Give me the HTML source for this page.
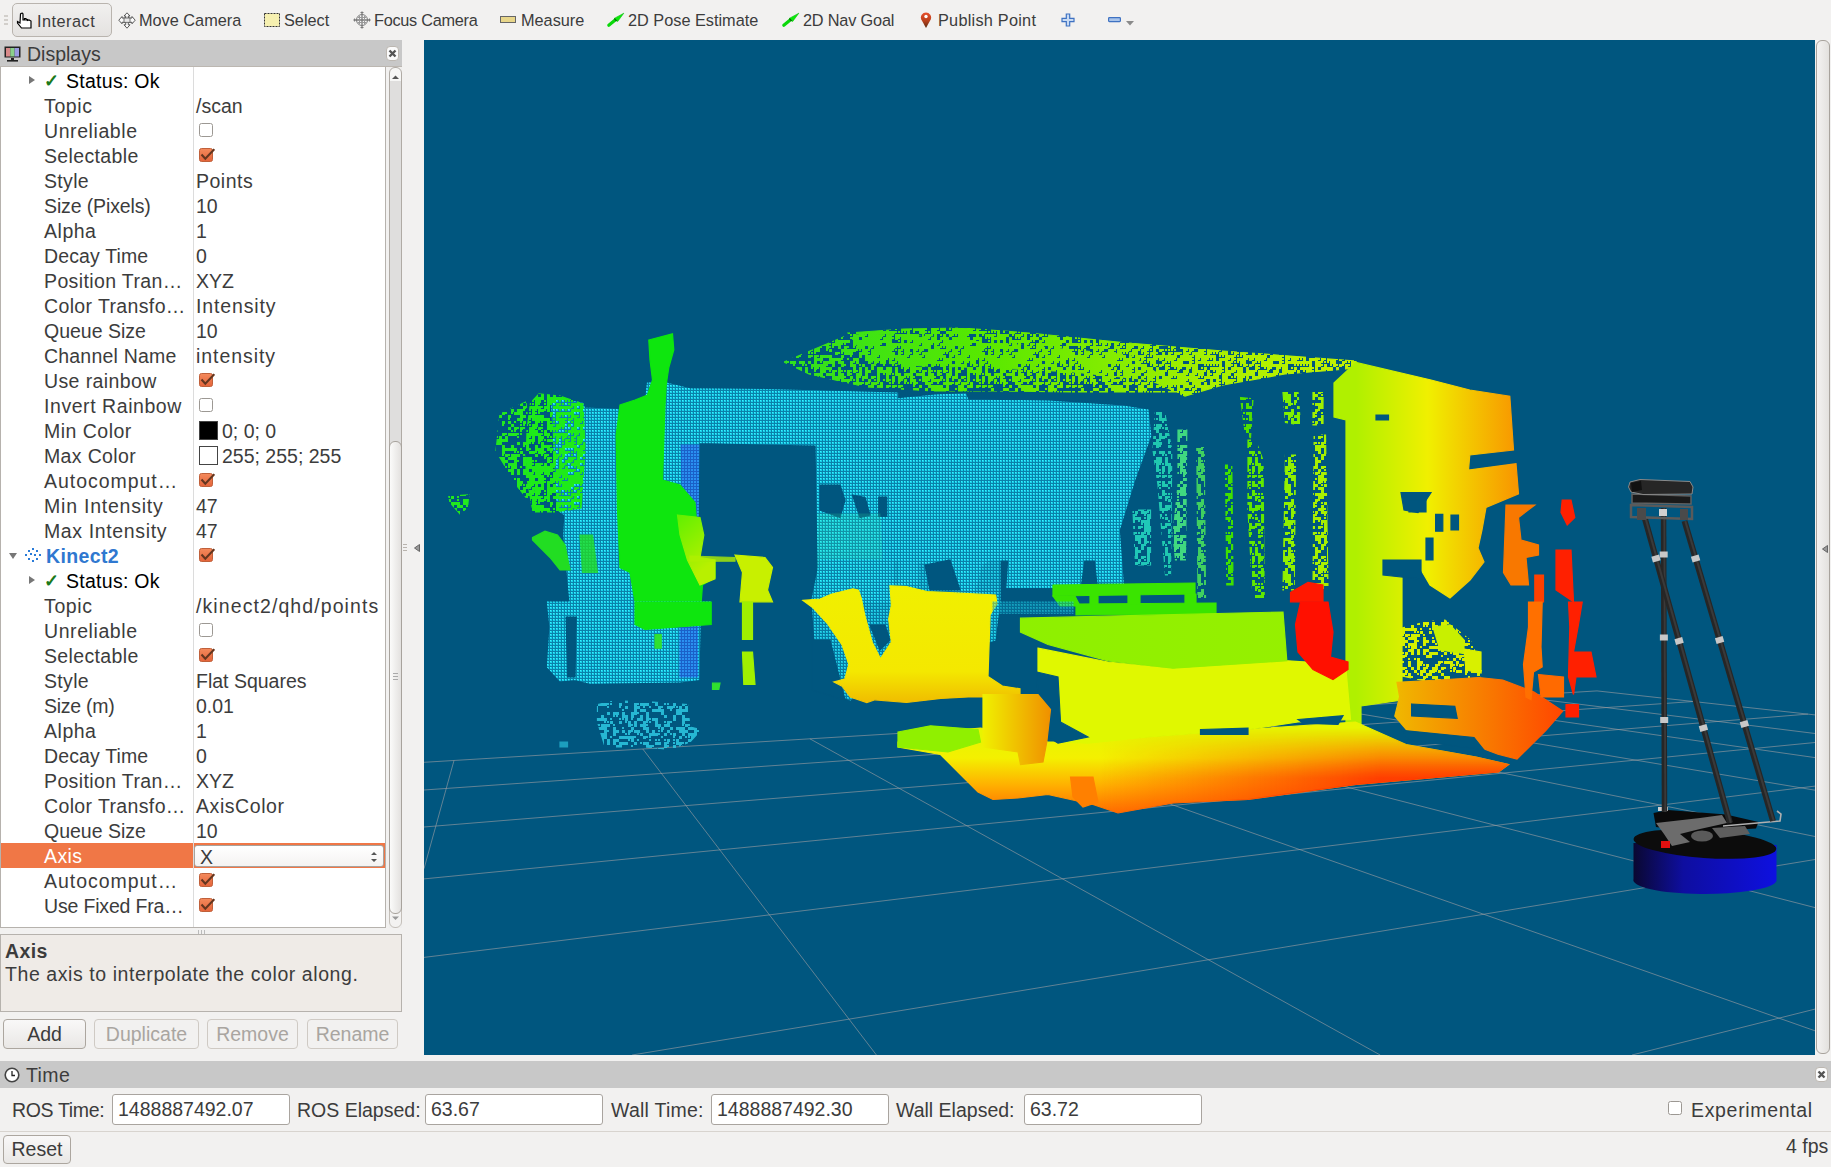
<!DOCTYPE html>
<html><head><meta charset="utf-8"><style>
*{box-sizing:border-box}
html,body{margin:0;padding:0}
body{width:1831px;height:1167px;overflow:hidden;position:relative;background:#f2f1f0;font-family:"Liberation Sans",sans-serif;color:#3c3c3c}
.abs{position:absolute}
.tb{position:absolute;top:0;left:0;width:1831px;height:40px;background:#f2f1f0}
.tbi{position:absolute;top:10px;font-size:16.3px;line-height:20px;color:#3c3c3c;white-space:nowrap}
.ic{position:absolute}
.hdr{position:absolute;background:#c8c8c8;height:27px}
.hdr .t{position:absolute;font-size:19.5px;line-height:24px;top:2px;color:#3c3c3c}
.xbtn{position:absolute;width:13px;height:15px;background:#fbfbfb;border:1px solid #bcb7b1;border-radius:4px}
.tree{position:absolute;left:0;top:67px;width:386px;height:861px;background:#fff;border:1px solid #b6b2ad;border-top:none;overflow:hidden}
.row{position:absolute;left:-1px;width:385px;height:25px}
.row .nm{position:absolute;left:44px;top:1px;font-size:19.5px;line-height:24px;white-space:nowrap;color:#3c3c3c}
.row .nm.st{left:66px;color:#000}
.row .nm.kin{left:46px;color:#2f78d0;font-weight:bold}
.row .vl{position:absolute;left:196px;top:1px;font-size:19.5px;line-height:24px;white-space:nowrap;color:#3c3c3c}
.row.sel{background:#f07746}
.row.sel .nm{color:#fff}
.arr{position:absolute;width:0;height:0}
.arr.r{top:8px;border-left:6px solid #777;border-top:4px solid transparent;border-bottom:4px solid transparent}
.arr.d{top:10px;border-top:6px solid #777;border-left:4px solid transparent;border-right:4px solid transparent}
.chk{position:absolute;left:44px;top:1px;font-size:18px;line-height:24px;color:#1b7a1b;font-weight:bold}
.pcicon{position:absolute;left:24px;top:4px}
.cb{position:absolute;left:199px;top:5px}
.sw{position:absolute;left:199px;top:3px;width:19px;height:19px;border:1px solid #444}
.combo{position:absolute;left:194px;top:2px;width:190px;height:22px;background:linear-gradient(#fff,#f4f3f2);border:1px solid #a8a29c;border-radius:3px}
.combo span{position:absolute;left:5px;top:-1px;font-size:19.5px;line-height:24px;color:#3c3c3c}
.colline{position:absolute;left:193px;top:67px;width:1px;height:860px;background:#dcdcdc}
.sbar{position:absolute;left:389px;top:67px;width:13px;height:861px}
.btn{position:absolute;height:30px;border:1px solid #aca69f;border-radius:4px;background:linear-gradient(#f9f8f8,#e9e7e5);font-size:19.5px;line-height:28px;text-align:center;color:#3c3c3c}
.btn.dis{color:#a9a5a0;background:#f2f1f0;border-color:#cfcac4}
.inp{position:absolute;height:31px;background:#fff;border:1px solid #a9a49f;border-radius:3px;font-size:19.5px;line-height:29px;padding-left:5px;color:#3c3c3c}
.lbl{position:absolute;font-size:19.5px;line-height:24px;color:#3c3c3c;white-space:nowrap}
</style></head><body><svg width="0" height="0" style="position:absolute"><defs><linearGradient id="cbg" x1="0" y1="0" x2="0" y2="1"><stop offset="0" stop-color="#f48a5c"/><stop offset="1" stop-color="#e4643a"/></linearGradient></defs></svg>
<!-- TOOLBAR -->
<div class="tb">
  <div class="abs" style="left:4px;top:15px;width:4px;height:2px;background:#d2cfcb"></div>
  <div class="abs" style="left:4px;top:19px;width:4px;height:2px;background:#d2cfcb"></div>
  <div class="abs" style="left:4px;top:23px;width:4px;height:2px;background:#d2cfcb"></div>
  <div class="abs" style="left:12px;top:3px;width:100px;height:34px;border:1px solid #b9b4ae;border-radius:5px;background:linear-gradient(#f1f0ef,#e4e2e0)"></div>
  <svg class="ic" style="left:16px;top:12px" width="18" height="18" viewBox="0 0 18 18"><path d="M5 1.5 Q6.5 0.5 7 2 L7 8 L8.5 8 L8.5 6.5 L10 6.5 L10 8 L11.5 7.5 L11.5 8.5 L13 8 L15 9 L15 16 L5.5 16 L1.5 11 L1.5 9.5 L4 11 L4.5 2Z" fill="#fff" stroke="#000" stroke-width="1.2"/></svg>
  <span class="tbi" style="letter-spacing:0.49px;left:37px;top:11px">Interact</span>
  <svg class="ic" style="left:118px;top:12px" width="18" height="17" viewBox="0 0 18 17"><path d="M9 0.8 L12 4 L10.3 4 L10.3 6 L14 6 L14 4.5 L17.2 8.2 L14 11.8 L14 10.3 L10.3 10.3 L10.3 12.8 L12 12.8 L9 16.2 L6 12.8 L7.7 12.8 L7.7 10.3 L4 10.3 L4 11.8 L0.8 8.2 L4 4.5 L4 6 L7.7 6 L7.7 4 L6 4Z" fill="#fafafa" stroke="#4a4a4a" stroke-width="0.9"/><rect x="6" y="6" width="6" height="4.3" fill="#e8e8e8" stroke="#555" stroke-width="0.8"/></svg>
  <span class="tbi" style="left:139px">Move Camera</span>
  <svg class="ic" style="left:264px;top:13px" width="16" height="14" viewBox="0 0 16 14"><rect x="0.5" y="0.5" width="15" height="13" fill="#f6f0b0" stroke="#333" stroke-dasharray="2 1"/></svg>
  <span class="tbi" style="left:284px">Select</span>
  <svg class="ic" style="left:353px;top:11px" width="18" height="18" viewBox="0 0 18 18"><g fill="none" stroke="#7a7a7a" stroke-width="1"><circle cx="9" cy="9" r="5.5" fill="#f6f6f6"/><path d="M9 0.5 L9 17.5 M0.5 9 L17.5 9" stroke-width="1.3"/><path d="M6.5 5 L6.5 13 M11.5 5 L11.5 13 M5 6.5 L13 6.5 M5 11.5 L13 11.5" stroke="#999"/><path d="M7.5 1.5 H10.5 M7.5 16.5 H10.5 M1.5 7.5 V10.5 M16.5 7.5 V10.5"/></g></svg>
  <span class="tbi" style="letter-spacing:-0.27px;left:374px">Focus Camera</span>
  <svg class="ic" style="left:500px;top:16px" width="16" height="8" viewBox="0 0 16 8"><rect x="0.5" y="0.5" width="15" height="6" fill="#e8d68a" stroke="#666"/></svg>
  <span class="tbi" style="left:521px">Measure</span>
  <svg class="ic" style="left:606px;top:10px" width="20" height="18" viewBox="0 0 20 18"><path d="M2.8 15.2 L9.8 9.6" stroke="#0ad80a" stroke-width="3.2" stroke-linecap="round"/><path d="M17.8 3.2 L8.2 8.4 L11.6 11.6Z" fill="#0aea0a" stroke="#08c008" stroke-width="0.6"/><path d="M8.4 8.6 L10.6 11" stroke="#066b06" stroke-width="1.2"/></svg>
  <span class="tbi" style="left:628px">2D Pose Estimate</span>
  <svg class="ic" style="left:781px;top:10px" width="20" height="18" viewBox="0 0 20 18"><path d="M2.8 15.2 L9.8 9.6" stroke="#0ad80a" stroke-width="3.2" stroke-linecap="round"/><path d="M17.8 3.2 L8.2 8.4 L11.6 11.6Z" fill="#0aea0a" stroke="#08c008" stroke-width="0.6"/><path d="M8.4 8.6 L10.6 11" stroke="#066b06" stroke-width="1.2"/></svg>
  <span class="tbi" style="letter-spacing:-0.18px;left:803px">2D Nav Goal</span>
  <svg class="ic" style="left:920px;top:11px" width="12" height="18" viewBox="0 0 12 18"><defs><linearGradient id="ping" x1="0" y1="0" x2="0" y2="1"><stop offset="0" stop-color="#e8502c"/><stop offset="0.55" stop-color="#b8401c"/><stop offset="1" stop-color="#5a2a10"/></linearGradient></defs><path d="M6 17 L1.3 8.5 A5.1 5.1 0 1 1 10.7 8.5Z" fill="url(#ping)"/><circle cx="6" cy="5.5" r="1.7" fill="#fff"/></svg>
  <span class="tbi" style="letter-spacing:0.24px;left:938px">Publish Point</span>
  <svg class="ic" style="left:1061px;top:13px" width="14" height="14" viewBox="0 0 14 14"><path d="M5.3 1 H8.7 V5.3 H13 V8.7 H8.7 V13 H5.3 V8.7 H1 V5.3 H5.3Z" fill="#c9dbf3" stroke="#3f72c2" stroke-width="1.2"/></svg>
  <svg class="ic" style="left:1108px;top:17px" width="13" height="6" viewBox="0 0 13 6"><rect x="0.6" y="0.6" width="11.8" height="4" rx="0.8" fill="#a9c4ea" stroke="#3f72c2" stroke-width="1.2"/></svg>
  <svg class="ic" style="left:1126px;top:21px" width="8" height="5" viewBox="0 0 8 5"><path d="M0 0 L8 0 L4 4.5Z" fill="#8a8a8a"/></svg>
</div>

<!-- LEFT DOCK -->
<div class="hdr" style="left:0;top:40px;width:402px">
  <svg class="ic" style="left:4px;top:6px" width="17" height="16" viewBox="0 0 17 16"><rect x="0.5" y="0.5" width="16" height="11" fill="#222"/><rect x="2" y="2" width="4.3" height="8.5" fill="#d98a8a"/><rect x="6.3" y="2" width="4.3" height="8.5" fill="#8ad08a"/><rect x="10.6" y="2" width="4.4" height="8.5" fill="#9a9ae0"/><rect x="7" y="12" width="3" height="2" fill="#222"/><rect x="3" y="14" width="11" height="1.6" fill="#222"/></svg>
  <span class="t" style="left:27px">Displays</span>
  <div class="xbtn" style="left:386px;top:6px"><svg width="11" height="13" viewBox="0 0 11 13" style="position:absolute;left:0;top:0"><path d="M2.5 3.5 L8.5 9.5 M8.5 3.5 L2.5 9.5" stroke="#555" stroke-width="2.4"/></svg></div>
</div>
<div class="abs" style="left:0;top:66px;width:402px;height:1px;background:#bcb7b1"></div>
<div class="tree">
<div class="row" style="top:1px"><span class="arr r" style="left:29px"></span><span class="chk">✓</span><span class="nm st" style="letter-spacing:0.28px">Status: Ok</span></div>
<div class="row" style="top:26px"><span class="nm" style="letter-spacing:0.64px">Topic</span><span class="vl">/scan</span></div>
<div class="row" style="top:51px"><span class="nm" style="letter-spacing:0.58px">Unreliable</span><svg class="cb" width="16" height="16" viewBox="0 0 16 16"><rect x="0.5" y="0.5" width="13" height="13" rx="2" fill="#fff" stroke="#9c9893"/></svg></div>
<div class="row" style="top:76px"><span class="nm" style="letter-spacing:0.36px">Selectable</span><svg class="cb" width="16" height="16" viewBox="0 0 16 16"><rect x="0.5" y="0.5" width="13" height="13" rx="2" fill="url(#cbg)" stroke="#c0603a"/><path d="M2.5 6.5 L6.3 10.8 L15.3 1.2" fill="none" stroke="#65361f" stroke-width="2.1"/></svg></div>
<div class="row" style="top:101px"><span class="nm" style="letter-spacing:0.32px">Style</span><span class="vl" style="letter-spacing:0.51px">Points</span></div>
<div class="row" style="top:126px"><span class="nm" style="letter-spacing:-0.13px">Size (Pixels)</span><span class="vl">10</span></div>
<div class="row" style="top:151px"><span class="nm" style="letter-spacing:0.52px">Alpha</span><span class="vl">1</span></div>
<div class="row" style="top:176px"><span class="nm" style="letter-spacing:0.14px">Decay Time</span><span class="vl">0</span></div>
<div class="row" style="top:201px"><span class="nm" style="letter-spacing:0.38px">Position Tran…</span><span class="vl">XYZ</span></div>
<div class="row" style="top:226px"><span class="nm" style="letter-spacing:0.37px">Color Transfo…</span><span class="vl" style="letter-spacing:0.87px">Intensity</span></div>
<div class="row" style="top:251px"><span class="nm">Queue Size</span><span class="vl">10</span></div>
<div class="row" style="top:276px"><span class="nm" style="letter-spacing:0.2px">Channel Name</span><span class="vl" style="letter-spacing:0.94px">intensity</span></div>
<div class="row" style="top:301px"><span class="nm" style="letter-spacing:0.39px">Use rainbow</span><svg class="cb" width="16" height="16" viewBox="0 0 16 16"><rect x="0.5" y="0.5" width="13" height="13" rx="2" fill="url(#cbg)" stroke="#c0603a"/><path d="M2.5 6.5 L6.3 10.8 L15.3 1.2" fill="none" stroke="#65361f" stroke-width="2.1"/></svg></div>
<div class="row" style="top:326px"><span class="nm" style="letter-spacing:0.56px">Invert Rainbow</span><svg class="cb" width="16" height="16" viewBox="0 0 16 16"><rect x="0.5" y="0.5" width="13" height="13" rx="2" fill="#fff" stroke="#9c9893"/></svg></div>
<div class="row" style="top:351px"><span class="nm" style="letter-spacing:0.48px">Min Color</span><span class="sw" style="background:#000"></span><span class="vl" style="left:222px">0; 0; 0</span></div>
<div class="row" style="top:376px"><span class="nm" style="letter-spacing:0.35px">Max Color</span><span class="sw" style="background:#fff"></span><span class="vl" style="left:222px">255; 255; 255</span></div>
<div class="row" style="top:401px"><span class="nm" style="letter-spacing:0.96px">Autocomput…</span><svg class="cb" width="16" height="16" viewBox="0 0 16 16"><rect x="0.5" y="0.5" width="13" height="13" rx="2" fill="url(#cbg)" stroke="#c0603a"/><path d="M2.5 6.5 L6.3 10.8 L15.3 1.2" fill="none" stroke="#65361f" stroke-width="2.1"/></svg></div>
<div class="row" style="top:426px"><span class="nm" style="letter-spacing:0.78px">Min Intensity</span><span class="vl">47</span></div>
<div class="row" style="top:451px"><span class="nm" style="letter-spacing:0.63px">Max Intensity</span><span class="vl">47</span></div>
<div class="row" style="top:476px"><span class="arr d" style="left:9px"></span><svg class="pcicon" width="18" height="16" viewBox="0 0 18 16"><g fill="#2a7bd8"><rect x="8" y="1" width="2" height="2"/><rect x="4" y="3" width="2" height="2"/><rect x="12" y="3" width="2" height="2"/><rect x="1" y="7" width="2" height="2"/><rect x="6" y="6" width="2" height="2"/><rect x="10" y="7" width="2" height="2"/><rect x="15" y="7" width="2" height="2"/><rect x="4" y="11" width="2" height="2"/><rect x="12" y="11" width="2" height="2"/><rect x="8" y="13" width="2" height="2"/></g></svg><span class="nm kin" style="letter-spacing:0.36px">Kinect2</span><svg class="cb" width="16" height="16" viewBox="0 0 16 16"><rect x="0.5" y="0.5" width="13" height="13" rx="2" fill="url(#cbg)" stroke="#c0603a"/><path d="M2.5 6.5 L6.3 10.8 L15.3 1.2" fill="none" stroke="#65361f" stroke-width="2.1"/></svg></div>
<div class="row" style="top:501px"><span class="arr r" style="left:29px"></span><span class="chk">✓</span><span class="nm st" style="letter-spacing:0.28px">Status: Ok</span></div>
<div class="row" style="top:526px"><span class="nm" style="letter-spacing:0.64px">Topic</span><span class="vl" style="letter-spacing:1.09px">/kinect2/qhd/points</span></div>
<div class="row" style="top:551px"><span class="nm" style="letter-spacing:0.58px">Unreliable</span><svg class="cb" width="16" height="16" viewBox="0 0 16 16"><rect x="0.5" y="0.5" width="13" height="13" rx="2" fill="#fff" stroke="#9c9893"/></svg></div>
<div class="row" style="top:576px"><span class="nm" style="letter-spacing:0.36px">Selectable</span><svg class="cb" width="16" height="16" viewBox="0 0 16 16"><rect x="0.5" y="0.5" width="13" height="13" rx="2" fill="url(#cbg)" stroke="#c0603a"/><path d="M2.5 6.5 L6.3 10.8 L15.3 1.2" fill="none" stroke="#65361f" stroke-width="2.1"/></svg></div>
<div class="row" style="top:601px"><span class="nm" style="letter-spacing:0.32px">Style</span><span class="vl">Flat Squares</span></div>
<div class="row" style="top:626px"><span class="nm" style="letter-spacing:-0.28px">Size (m)</span><span class="vl">0.01</span></div>
<div class="row" style="top:651px"><span class="nm" style="letter-spacing:0.52px">Alpha</span><span class="vl">1</span></div>
<div class="row" style="top:676px"><span class="nm" style="letter-spacing:0.14px">Decay Time</span><span class="vl">0</span></div>
<div class="row" style="top:701px"><span class="nm" style="letter-spacing:0.38px">Position Tran…</span><span class="vl">XYZ</span></div>
<div class="row" style="top:726px"><span class="nm" style="letter-spacing:0.37px">Color Transfo…</span><span class="vl" style="letter-spacing:0.56px">AxisColor</span></div>
<div class="row" style="top:751px"><span class="nm">Queue Size</span><span class="vl">10</span></div>
<div class="row sel" style="top:776px"><span class="nm" style="letter-spacing:0.39px">Axis</span><div class="combo"><span>X</span><svg width="10" height="16" style="position:absolute;right:4px;top:3px" viewBox="0 0 10 16"><path d="M2 6 L5 3 L8 6Z M2 10 L5 13 L8 10Z" fill="#555"/></svg></div></div>
<div class="row" style="top:801px"><span class="nm" style="letter-spacing:0.96px">Autocomput…</span><svg class="cb" width="16" height="16" viewBox="0 0 16 16"><rect x="0.5" y="0.5" width="13" height="13" rx="2" fill="url(#cbg)" stroke="#c0603a"/><path d="M2.5 6.5 L6.3 10.8 L15.3 1.2" fill="none" stroke="#65361f" stroke-width="2.1"/></svg></div>
<div class="row" style="top:826px"><span class="nm" style="letter-spacing:-0.17px">Use Fixed Fra…</span><svg class="cb" width="16" height="16" viewBox="0 0 16 16"><rect x="0.5" y="0.5" width="13" height="13" rx="2" fill="url(#cbg)" stroke="#c0603a"/><path d="M2.5 6.5 L6.3 10.8 L15.3 1.2" fill="none" stroke="#65361f" stroke-width="2.1"/></svg></div>
</div>
<div class="colline"></div>
<div class="sbar">
  <div class="abs" style="left:0;top:0;width:13px;height:861px;background:#efeeed"></div>
  <div class="abs" style="left:0;top:0;width:13px;height:40px;border:1px solid #b0aba5;border-radius:6px;background:#f6f6f5"></div>
  <svg class="ic" style="left:3px;top:8px" width="7" height="5" viewBox="0 0 7 5"><path d="M0 4 L3.5 0.5 L7 4Z" fill="#555"/></svg>
  <div class="abs" style="left:0;top:14px;width:13px;height:400px;border:1px solid #b0aba5;border-top:none;border-bottom:none;background:#dfdedd"></div>
  <div class="abs" style="left:0;top:830px;width:13px;height:31px;border:1px solid #c4bfb9;border-radius:6px;background:#f3f2f1"></div><svg class="ic" style="left:3px;top:849px" width="7" height="5" viewBox="0 0 7 5"><path d="M0 0.5 L3.5 4 L7 0.5Z" fill="#999"/></svg><div class="abs" style="left:0;top:374px;width:13px;height:473px;border:1px solid #a8a39d;border-radius:6px;background:linear-gradient(90deg,#fbfbfa,#e3e1df)"></div>
  <div class="abs" style="left:4px;top:606px;width:5px;height:1px;background:#aaa"></div>
  <div class="abs" style="left:4px;top:609px;width:5px;height:1px;background:#aaa"></div>
  <div class="abs" style="left:4px;top:612px;width:5px;height:1px;background:#aaa"></div>
</div>
<div class="abs" style="left:198px;top:930px;width:1px;height:4px;background:#bbb"></div>
<div class="abs" style="left:201px;top:930px;width:1px;height:4px;background:#bbb"></div>
<div class="abs" style="left:204px;top:930px;width:1px;height:4px;background:#bbb"></div>
<div class="abs" style="left:0;top:934px;width:402px;height:78px;background:#efebe7;border:1px solid #b6b2ad"></div>
<span class="lbl" style="letter-spacing:0.39px;left:5px;top:939px;font-weight:bold;color:#3c3c3c">Axis</span>
<span class="lbl" style="letter-spacing:0.57px;left:5px;top:962px">The axis to interpolate the color along.</span>
<div class="btn" style="left:3px;top:1019px;width:83px">Add</div>
<div class="btn dis" style="left:94px;top:1019px;width:105px">Duplicate</div>
<div class="btn dis" style="left:207px;top:1019px;width:91px">Remove</div>
<div class="btn dis" style="left:307px;top:1019px;width:91px">Rename</div>
<!-- splitter handle -->
<div class="abs" style="left:403px;top:544px;width:4px;height:1px;background:#b9b4ae"></div>
<div class="abs" style="left:403px;top:547px;width:4px;height:1px;background:#b9b4ae"></div>
<div class="abs" style="left:403px;top:550px;width:4px;height:1px;background:#b9b4ae"></div>
<svg class="ic" style="left:414px;top:544px" width="6" height="8" viewBox="0 0 6 8"><path d="M5.5 0.5 L0.5 4 L5.5 7.5Z" fill="#999" stroke="#666"/></svg>

<!-- 3D VIEW -->
<div class="abs" style="left:424px;top:40px;width:1391px;height:1015px;background:#00567f;overflow:hidden">
<svg id="view" width="1391" height="1015" viewBox="0 0 1391 1015" style="position:absolute;left:0;top:0">
<path d="M0.0 722.3L1173.0 650.9 M0.0 750.0L1269.1 661.5 M0.0 787.0L1383.9 674.1 M0.0 838.9L1391.0 702.5 M0.0 917.4L1391.0 746.1 M208.1 1015.0L1391.0 819.5 M1208.0 1015.0L1391.0 969.1 M30.0 720.5L0.0 828.7 M218.8 709.0L452.4 1015.0 M385.9 698.8L956.2 1015.0 M534.9 689.7L1391.0 990.8 M668.6 681.6L1391.0 867.6 M789.2 674.2L1391.0 796.5 M898.6 667.6L1391.0 750.2 M998.2 661.5L1391.0 717.6 M1089.3 656.0L1391.0 693.5 M1173.0 650.9L1391.0 674.9" stroke="#a0a0a4" stroke-opacity="0.6" stroke-width="1" fill="none"/>
<!--CLOUD--><g id="cloud"><defs><pattern id="cyan" width="3" height="3" patternUnits="userSpaceOnUse"><rect width="3" height="3" fill="#0a82aa"/><rect width="2" height="2" fill="#1ad0ea"/><rect width="1" height="1" fill="#3af2ff"/></pattern><pattern id="bluep" width="3" height="3" patternUnits="userSpaceOnUse"><rect width="3" height="3" fill="#1a60c8"/><rect width="2" height="2" fill="#2a90f0"/></pattern><pattern id="sparse" width="4" height="4" patternUnits="userSpaceOnUse"><rect width="2" height="2" fill="#20c8e0"/></pattern><pattern id="spDp" width="90" height="90" patternUnits="userSpaceOnUse"><path d="M0 0h3v3h-3zM3 0h3v3h-3zM6 0h3v3h-3zM9 0h2v2h-2zM12 0h3v3h-3zM18 0h2v2h-2zM21 0h3v3h-3zM24 0h3v3h-3zM30 0h2v2h-2zM33 0h3v3h-3zM36 0h3v3h-3zM39 0h3v3h-3zM45 0h2v2h-2zM51 0h2v2h-2zM54 0h2v2h-2zM57 0h2v2h-2zM63 0h3v3h-3zM66 0h2v2h-2zM69 0h3v3h-3zM72 0h3v3h-3zM75 0h3v3h-3zM78 0h3v3h-3zM84 0h2v2h-2zM3 3h3v3h-3zM15 3h2v2h-2zM18 3h2v2h-2zM21 3h3v3h-3zM24 3h2v2h-2zM30 3h2v2h-2zM33 3h3v3h-3zM36 3h2v2h-2zM42 3h3v3h-3zM45 3h2v2h-2zM48 3h2v2h-2zM54 3h2v2h-2zM57 3h3v3h-3zM60 3h3v3h-3zM63 3h3v3h-3zM66 3h3v3h-3zM69 3h2v2h-2zM72 3h2v2h-2zM78 3h3v3h-3zM81 3h3v3h-3zM84 3h3v3h-3zM87 3h2v2h-2zM0 6h3v3h-3zM3 6h3v3h-3zM6 6h2v2h-2zM9 6h3v3h-3zM12 6h3v3h-3zM15 6h3v3h-3zM18 6h3v3h-3zM21 6h3v3h-3zM24 6h3v3h-3zM27 6h2v2h-2zM30 6h3v3h-3zM33 6h3v3h-3zM39 6h3v3h-3zM42 6h3v3h-3zM45 6h3v3h-3zM48 6h3v3h-3zM51 6h3v3h-3zM54 6h3v3h-3zM57 6h2v2h-2zM60 6h3v3h-3zM66 6h3v3h-3zM69 6h3v3h-3zM72 6h3v3h-3zM75 6h2v2h-2zM78 6h2v2h-2zM81 6h3v3h-3zM84 6h2v2h-2zM87 6h3v3h-3zM0 9h3v3h-3zM3 9h2v2h-2zM9 9h3v3h-3zM15 9h2v2h-2zM18 9h3v3h-3zM21 9h2v2h-2zM24 9h3v3h-3zM27 9h3v3h-3zM30 9h2v2h-2zM33 9h3v3h-3zM45 9h2v2h-2zM51 9h2v2h-2zM57 9h3v3h-3zM60 9h3v3h-3zM63 9h3v3h-3zM66 9h3v3h-3zM72 9h2v2h-2zM75 9h2v2h-2zM84 9h3v3h-3zM87 9h3v3h-3zM0 12h3v3h-3zM3 12h3v3h-3zM9 12h3v3h-3zM12 12h2v2h-2zM15 12h2v2h-2zM18 12h3v3h-3zM21 12h2v2h-2zM24 12h2v2h-2zM36 12h3v3h-3zM42 12h3v3h-3zM45 12h3v3h-3zM48 12h3v3h-3zM51 12h3v3h-3zM54 12h3v3h-3zM57 12h3v3h-3zM66 12h3v3h-3zM69 12h3v3h-3zM72 12h3v3h-3zM75 12h3v3h-3zM78 12h3v3h-3zM81 12h3v3h-3zM84 12h3v3h-3zM87 12h3v3h-3zM0 15h3v3h-3zM6 15h2v2h-2zM9 15h3v3h-3zM12 15h3v3h-3zM15 15h3v3h-3zM18 15h3v3h-3zM21 15h3v3h-3zM24 15h3v3h-3zM27 15h3v3h-3zM36 15h2v2h-2zM42 15h3v3h-3zM45 15h2v2h-2zM48 15h2v2h-2zM54 15h2v2h-2zM57 15h3v3h-3zM60 15h3v3h-3zM63 15h2v2h-2zM66 15h3v3h-3zM69 15h2v2h-2zM72 15h3v3h-3zM78 15h2v2h-2zM81 15h2v2h-2zM87 15h2v2h-2zM0 18h2v2h-2zM3 18h2v2h-2zM6 18h2v2h-2zM12 18h3v3h-3zM15 18h2v2h-2zM18 18h3v3h-3zM21 18h3v3h-3zM24 18h3v3h-3zM27 18h3v3h-3zM30 18h3v3h-3zM33 18h3v3h-3zM39 18h2v2h-2zM42 18h3v3h-3zM45 18h3v3h-3zM48 18h3v3h-3zM51 18h2v2h-2zM54 18h3v3h-3zM57 18h2v2h-2zM60 18h3v3h-3zM63 18h3v3h-3zM66 18h3v3h-3zM69 18h3v3h-3zM72 18h3v3h-3zM78 18h2v2h-2zM81 18h2v2h-2zM84 18h3v3h-3zM87 18h3v3h-3zM0 21h3v3h-3zM3 21h3v3h-3zM6 21h2v2h-2zM9 21h2v2h-2zM12 21h3v3h-3zM15 21h2v2h-2zM21 21h3v3h-3zM24 21h2v2h-2zM27 21h2v2h-2zM33 21h3v3h-3zM36 21h2v2h-2zM39 21h2v2h-2zM45 21h3v3h-3zM48 21h3v3h-3zM51 21h2v2h-2zM57 21h2v2h-2zM60 21h3v3h-3zM63 21h3v3h-3zM66 21h2v2h-2zM69 21h3v3h-3zM72 21h3v3h-3zM75 21h3v3h-3zM78 21h3v3h-3zM81 21h3v3h-3zM87 21h3v3h-3zM0 24h3v3h-3zM3 24h3v3h-3zM12 24h2v2h-2zM15 24h2v2h-2zM18 24h3v3h-3zM21 24h3v3h-3zM27 24h2v2h-2zM33 24h3v3h-3zM36 24h3v3h-3zM39 24h2v2h-2zM42 24h3v3h-3zM45 24h3v3h-3zM48 24h3v3h-3zM54 24h3v3h-3zM60 24h3v3h-3zM63 24h3v3h-3zM66 24h3v3h-3zM69 24h3v3h-3zM72 24h3v3h-3zM75 24h2v2h-2zM78 24h2v2h-2zM81 24h3v3h-3zM84 24h2v2h-2zM87 24h3v3h-3zM0 27h2v2h-2zM3 27h3v3h-3zM6 27h3v3h-3zM9 27h3v3h-3zM15 27h3v3h-3zM18 27h3v3h-3zM21 27h2v2h-2zM24 27h3v3h-3zM27 27h2v2h-2zM33 27h3v3h-3zM36 27h3v3h-3zM39 27h3v3h-3zM42 27h3v3h-3zM45 27h2v2h-2zM48 27h2v2h-2zM57 27h3v3h-3zM60 27h3v3h-3zM66 27h3v3h-3zM72 27h3v3h-3zM75 27h3v3h-3zM78 27h3v3h-3zM81 27h3v3h-3zM84 27h3v3h-3zM87 27h3v3h-3zM0 30h3v3h-3zM3 30h3v3h-3zM12 30h2v2h-2zM15 30h3v3h-3zM18 30h3v3h-3zM21 30h3v3h-3zM27 30h2v2h-2zM30 30h3v3h-3zM36 30h2v2h-2zM39 30h2v2h-2zM42 30h2v2h-2zM51 30h2v2h-2zM54 30h3v3h-3zM57 30h3v3h-3zM60 30h3v3h-3zM63 30h3v3h-3zM66 30h3v3h-3zM69 30h3v3h-3zM72 30h2v2h-2zM75 30h3v3h-3zM81 30h3v3h-3zM84 30h3v3h-3zM87 30h3v3h-3zM0 33h3v3h-3zM6 33h3v3h-3zM9 33h3v3h-3zM12 33h3v3h-3zM15 33h3v3h-3zM18 33h3v3h-3zM21 33h3v3h-3zM24 33h3v3h-3zM27 33h2v2h-2zM30 33h3v3h-3zM33 33h3v3h-3zM39 33h3v3h-3zM42 33h3v3h-3zM45 33h3v3h-3zM48 33h3v3h-3zM51 33h3v3h-3zM57 33h2v2h-2zM60 33h3v3h-3zM63 33h2v2h-2zM66 33h3v3h-3zM69 33h3v3h-3zM75 33h3v3h-3zM78 33h3v3h-3zM81 33h3v3h-3zM84 33h3v3h-3zM0 36h2v2h-2zM3 36h2v2h-2zM12 36h3v3h-3zM15 36h2v2h-2zM18 36h3v3h-3zM24 36h3v3h-3zM27 36h3v3h-3zM33 36h2v2h-2zM36 36h2v2h-2zM39 36h2v2h-2zM42 36h3v3h-3zM45 36h2v2h-2zM48 36h3v3h-3zM51 36h2v2h-2zM54 36h2v2h-2zM57 36h3v3h-3zM60 36h2v2h-2zM63 36h3v3h-3zM66 36h3v3h-3zM69 36h3v3h-3zM75 36h2v2h-2zM81 36h2v2h-2zM84 36h3v3h-3zM87 36h3v3h-3zM0 39h2v2h-2zM3 39h3v3h-3zM6 39h3v3h-3zM9 39h3v3h-3zM12 39h3v3h-3zM15 39h3v3h-3zM18 39h3v3h-3zM24 39h3v3h-3zM27 39h2v2h-2zM30 39h2v2h-2zM33 39h3v3h-3zM36 39h3v3h-3zM42 39h3v3h-3zM48 39h2v2h-2zM51 39h3v3h-3zM54 39h2v2h-2zM57 39h3v3h-3zM60 39h2v2h-2zM63 39h3v3h-3zM66 39h3v3h-3zM72 39h2v2h-2zM75 39h3v3h-3zM78 39h2v2h-2zM81 39h3v3h-3zM84 39h3v3h-3zM87 39h2v2h-2zM0 42h3v3h-3zM3 42h3v3h-3zM6 42h2v2h-2zM9 42h3v3h-3zM12 42h3v3h-3zM15 42h2v2h-2zM18 42h2v2h-2zM24 42h2v2h-2zM27 42h3v3h-3zM39 42h2v2h-2zM42 42h2v2h-2zM48 42h2v2h-2zM51 42h3v3h-3zM54 42h3v3h-3zM57 42h3v3h-3zM60 42h2v2h-2zM63 42h3v3h-3zM66 42h2v2h-2zM69 42h3v3h-3zM72 42h3v3h-3zM75 42h3v3h-3zM78 42h2v2h-2zM81 42h2v2h-2zM0 45h3v3h-3zM3 45h3v3h-3zM6 45h3v3h-3zM9 45h2v2h-2zM12 45h3v3h-3zM21 45h3v3h-3zM27 45h3v3h-3zM30 45h3v3h-3zM33 45h3v3h-3zM36 45h2v2h-2zM39 45h2v2h-2zM48 45h3v3h-3zM51 45h3v3h-3zM54 45h3v3h-3zM57 45h3v3h-3zM60 45h3v3h-3zM66 45h3v3h-3zM69 45h3v3h-3zM72 45h3v3h-3zM81 45h3v3h-3zM84 45h2v2h-2zM87 45h2v2h-2zM0 48h3v3h-3zM3 48h3v3h-3zM6 48h2v2h-2zM12 48h3v3h-3zM21 48h3v3h-3zM24 48h3v3h-3zM27 48h3v3h-3zM33 48h3v3h-3zM36 48h3v3h-3zM42 48h2v2h-2zM45 48h3v3h-3zM48 48h3v3h-3zM60 48h3v3h-3zM63 48h3v3h-3zM66 48h3v3h-3zM69 48h2v2h-2zM72 48h3v3h-3zM75 48h3v3h-3zM84 48h3v3h-3zM0 51h3v3h-3zM6 51h3v3h-3zM15 51h3v3h-3zM18 51h3v3h-3zM21 51h2v2h-2zM24 51h3v3h-3zM27 51h3v3h-3zM30 51h2v2h-2zM36 51h2v2h-2zM39 51h3v3h-3zM45 51h3v3h-3zM48 51h3v3h-3zM51 51h3v3h-3zM54 51h2v2h-2zM57 51h2v2h-2zM60 51h2v2h-2zM63 51h3v3h-3zM66 51h3v3h-3zM69 51h3v3h-3zM72 51h2v2h-2zM78 51h2v2h-2zM81 51h3v3h-3zM84 51h3v3h-3zM0 54h3v3h-3zM3 54h3v3h-3zM6 54h2v2h-2zM9 54h3v3h-3zM21 54h3v3h-3zM27 54h2v2h-2zM30 54h3v3h-3zM33 54h2v2h-2zM39 54h3v3h-3zM42 54h3v3h-3zM45 54h2v2h-2zM48 54h3v3h-3zM57 54h2v2h-2zM63 54h3v3h-3zM66 54h3v3h-3zM72 54h2v2h-2zM75 54h3v3h-3zM87 54h3v3h-3zM0 57h3v3h-3zM3 57h3v3h-3zM6 57h3v3h-3zM9 57h3v3h-3zM12 57h3v3h-3zM15 57h3v3h-3zM30 57h2v2h-2zM33 57h3v3h-3zM36 57h2v2h-2zM39 57h3v3h-3zM42 57h2v2h-2zM45 57h3v3h-3zM48 57h2v2h-2zM54 57h3v3h-3zM57 57h3v3h-3zM60 57h2v2h-2zM63 57h3v3h-3zM69 57h2v2h-2zM72 57h3v3h-3zM75 57h2v2h-2zM78 57h2v2h-2zM81 57h3v3h-3zM84 57h3v3h-3zM87 57h3v3h-3zM0 60h2v2h-2zM3 60h3v3h-3zM6 60h3v3h-3zM9 60h3v3h-3zM12 60h3v3h-3zM15 60h3v3h-3zM18 60h2v2h-2zM21 60h2v2h-2zM33 60h3v3h-3zM36 60h2v2h-2zM39 60h3v3h-3zM45 60h3v3h-3zM51 60h3v3h-3zM54 60h3v3h-3zM57 60h2v2h-2zM60 60h3v3h-3zM63 60h3v3h-3zM66 60h3v3h-3zM69 60h3v3h-3zM72 60h2v2h-2zM75 60h3v3h-3zM78 60h2v2h-2zM84 60h3v3h-3zM87 60h3v3h-3zM6 63h3v3h-3zM9 63h2v2h-2zM12 63h3v3h-3zM15 63h3v3h-3zM18 63h2v2h-2zM21 63h3v3h-3zM24 63h3v3h-3zM27 63h2v2h-2zM30 63h3v3h-3zM36 63h3v3h-3zM39 63h3v3h-3zM45 63h3v3h-3zM48 63h3v3h-3zM51 63h2v2h-2zM57 63h3v3h-3zM60 63h3v3h-3zM63 63h3v3h-3zM69 63h2v2h-2zM75 63h2v2h-2zM78 63h3v3h-3zM81 63h3v3h-3zM84 63h3v3h-3zM3 66h3v3h-3zM6 66h3v3h-3zM9 66h3v3h-3zM12 66h3v3h-3zM15 66h3v3h-3zM18 66h3v3h-3zM21 66h3v3h-3zM24 66h3v3h-3zM27 66h3v3h-3zM30 66h3v3h-3zM33 66h3v3h-3zM36 66h3v3h-3zM39 66h2v2h-2zM45 66h3v3h-3zM48 66h2v2h-2zM51 66h3v3h-3zM60 66h2v2h-2zM63 66h3v3h-3zM66 66h3v3h-3zM69 66h3v3h-3zM72 66h3v3h-3zM78 66h3v3h-3zM84 66h3v3h-3zM87 66h2v2h-2zM0 69h3v3h-3zM3 69h3v3h-3zM6 69h2v2h-2zM12 69h2v2h-2zM18 69h3v3h-3zM21 69h3v3h-3zM24 69h3v3h-3zM27 69h3v3h-3zM30 69h3v3h-3zM33 69h3v3h-3zM36 69h3v3h-3zM39 69h2v2h-2zM42 69h3v3h-3zM45 69h3v3h-3zM48 69h3v3h-3zM51 69h3v3h-3zM54 69h3v3h-3zM57 69h3v3h-3zM60 69h2v2h-2zM66 69h3v3h-3zM69 69h3v3h-3zM72 69h2v2h-2zM75 69h2v2h-2zM78 69h3v3h-3zM81 69h2v2h-2zM84 69h3v3h-3zM87 69h3v3h-3zM0 72h2v2h-2zM6 72h2v2h-2zM9 72h2v2h-2zM12 72h3v3h-3zM15 72h2v2h-2zM18 72h2v2h-2zM21 72h3v3h-3zM24 72h3v3h-3zM27 72h2v2h-2zM30 72h3v3h-3zM33 72h3v3h-3zM39 72h3v3h-3zM42 72h3v3h-3zM45 72h3v3h-3zM48 72h3v3h-3zM51 72h3v3h-3zM60 72h3v3h-3zM63 72h3v3h-3zM66 72h2v2h-2zM69 72h3v3h-3zM75 72h3v3h-3zM78 72h3v3h-3zM81 72h3v3h-3zM84 72h3v3h-3zM87 72h3v3h-3zM3 75h3v3h-3zM6 75h2v2h-2zM9 75h3v3h-3zM15 75h3v3h-3zM18 75h3v3h-3zM21 75h3v3h-3zM24 75h3v3h-3zM27 75h3v3h-3zM33 75h2v2h-2zM36 75h2v2h-2zM39 75h3v3h-3zM42 75h3v3h-3zM45 75h2v2h-2zM48 75h3v3h-3zM51 75h3v3h-3zM54 75h3v3h-3zM57 75h3v3h-3zM60 75h3v3h-3zM63 75h3v3h-3zM66 75h3v3h-3zM69 75h2v2h-2zM72 75h3v3h-3zM75 75h3v3h-3zM78 75h3v3h-3zM81 75h2v2h-2zM84 75h3v3h-3zM0 78h3v3h-3zM3 78h3v3h-3zM9 78h3v3h-3zM15 78h3v3h-3zM18 78h3v3h-3zM24 78h3v3h-3zM27 78h3v3h-3zM30 78h2v2h-2zM36 78h3v3h-3zM39 78h3v3h-3zM42 78h3v3h-3zM45 78h3v3h-3zM48 78h2v2h-2zM51 78h2v2h-2zM54 78h3v3h-3zM57 78h3v3h-3zM60 78h3v3h-3zM63 78h3v3h-3zM66 78h3v3h-3zM72 78h3v3h-3zM75 78h2v2h-2zM78 78h2v2h-2zM81 78h3v3h-3zM84 78h3v3h-3zM87 78h3v3h-3zM0 81h3v3h-3zM3 81h3v3h-3zM6 81h3v3h-3zM9 81h2v2h-2zM12 81h3v3h-3zM15 81h3v3h-3zM18 81h3v3h-3zM21 81h3v3h-3zM24 81h3v3h-3zM27 81h3v3h-3zM30 81h2v2h-2zM33 81h3v3h-3zM36 81h3v3h-3zM39 81h2v2h-2zM42 81h2v2h-2zM45 81h3v3h-3zM48 81h3v3h-3zM51 81h3v3h-3zM54 81h3v3h-3zM57 81h3v3h-3zM60 81h3v3h-3zM63 81h3v3h-3zM66 81h3v3h-3zM69 81h2v2h-2zM72 81h2v2h-2zM78 81h2v2h-2zM81 81h2v2h-2zM87 81h3v3h-3zM3 84h2v2h-2zM9 84h3v3h-3zM12 84h2v2h-2zM15 84h3v3h-3zM18 84h2v2h-2zM21 84h3v3h-3zM27 84h3v3h-3zM33 84h3v3h-3zM39 84h3v3h-3zM45 84h2v2h-2zM48 84h3v3h-3zM51 84h3v3h-3zM54 84h3v3h-3zM57 84h3v3h-3zM66 84h2v2h-2zM69 84h3v3h-3zM72 84h3v3h-3zM84 84h3v3h-3zM87 84h3v3h-3zM3 87h3v3h-3zM9 87h2v2h-2zM12 87h3v3h-3zM15 87h2v2h-2zM18 87h3v3h-3zM21 87h3v3h-3zM24 87h3v3h-3zM27 87h3v3h-3zM33 87h3v3h-3zM36 87h3v3h-3zM39 87h3v3h-3zM42 87h3v3h-3zM45 87h3v3h-3zM48 87h3v3h-3zM51 87h3v3h-3zM54 87h3v3h-3zM60 87h3v3h-3zM63 87h2v2h-2zM66 87h3v3h-3zM69 87h3v3h-3zM72 87h3v3h-3zM75 87h3v3h-3zM78 87h2v2h-2zM81 87h2v2h-2zM84 87h2v2h-2zM87 87h2v2h-2z" fill="#fff"/></pattern><mask id="spD" maskUnits="userSpaceOnUse" x="0" y="0" width="1391" height="1015"><rect width="1391" height="1015" fill="url(#spDp)"/></mask><pattern id="spMp" width="90" height="90" patternUnits="userSpaceOnUse"><path d="M18 0h3v3h-3zM30 0h3v3h-3zM33 0h3v3h-3zM36 0h3v3h-3zM39 0h3v3h-3zM48 0h2v2h-2zM51 0h3v3h-3zM54 0h3v3h-3zM60 0h3v3h-3zM69 0h2v2h-2zM72 0h3v3h-3zM75 0h2v2h-2zM87 0h3v3h-3zM0 3h3v3h-3zM3 3h3v3h-3zM6 3h3v3h-3zM12 3h3v3h-3zM18 3h3v3h-3zM21 3h2v2h-2zM24 3h2v2h-2zM27 3h2v2h-2zM33 3h2v2h-2zM36 3h3v3h-3zM39 3h3v3h-3zM42 3h2v2h-2zM45 3h2v2h-2zM54 3h3v3h-3zM57 3h2v2h-2zM60 3h2v2h-2zM69 3h2v2h-2zM72 3h3v3h-3zM75 3h2v2h-2zM78 3h2v2h-2zM81 3h3v3h-3zM84 3h3v3h-3zM87 3h3v3h-3zM6 6h3v3h-3zM12 6h3v3h-3zM15 6h3v3h-3zM21 6h3v3h-3zM24 6h2v2h-2zM27 6h3v3h-3zM33 6h2v2h-2zM45 6h3v3h-3zM48 6h2v2h-2zM51 6h3v3h-3zM63 6h3v3h-3zM69 6h3v3h-3zM72 6h3v3h-3zM75 6h2v2h-2zM84 6h3v3h-3zM87 6h3v3h-3zM6 9h2v2h-2zM21 9h2v2h-2zM24 9h3v3h-3zM33 9h2v2h-2zM39 9h3v3h-3zM42 9h3v3h-3zM48 9h2v2h-2zM57 9h3v3h-3zM66 9h2v2h-2zM81 9h3v3h-3zM84 9h2v2h-2zM0 12h3v3h-3zM9 12h2v2h-2zM12 12h3v3h-3zM15 12h3v3h-3zM27 12h3v3h-3zM30 12h3v3h-3zM33 12h3v3h-3zM39 12h3v3h-3zM42 12h3v3h-3zM45 12h3v3h-3zM48 12h3v3h-3zM51 12h3v3h-3zM54 12h3v3h-3zM57 12h3v3h-3zM63 12h3v3h-3zM66 12h3v3h-3zM69 12h2v2h-2zM72 12h3v3h-3zM75 12h3v3h-3zM78 12h3v3h-3zM81 12h2v2h-2zM87 12h2v2h-2zM3 15h3v3h-3zM6 15h3v3h-3zM15 15h3v3h-3zM21 15h3v3h-3zM24 15h3v3h-3zM27 15h3v3h-3zM33 15h3v3h-3zM36 15h3v3h-3zM42 15h2v2h-2zM48 15h3v3h-3zM54 15h3v3h-3zM57 15h2v2h-2zM60 15h3v3h-3zM63 15h3v3h-3zM69 15h3v3h-3zM78 15h3v3h-3zM81 15h2v2h-2zM87 15h3v3h-3zM0 18h2v2h-2zM3 18h3v3h-3zM6 18h3v3h-3zM9 18h2v2h-2zM12 18h2v2h-2zM15 18h3v3h-3zM18 18h3v3h-3zM21 18h3v3h-3zM24 18h2v2h-2zM27 18h3v3h-3zM30 18h3v3h-3zM39 18h3v3h-3zM45 18h3v3h-3zM54 18h2v2h-2zM57 18h3v3h-3zM63 18h3v3h-3zM69 18h2v2h-2zM75 18h3v3h-3zM84 18h3v3h-3zM87 18h3v3h-3zM0 21h3v3h-3zM3 21h2v2h-2zM6 21h3v3h-3zM18 21h2v2h-2zM30 21h2v2h-2zM33 21h3v3h-3zM42 21h3v3h-3zM48 21h3v3h-3zM51 21h3v3h-3zM57 21h3v3h-3zM60 21h3v3h-3zM63 21h3v3h-3zM72 21h3v3h-3zM75 21h3v3h-3zM78 21h2v2h-2zM81 21h3v3h-3zM87 21h3v3h-3zM0 24h2v2h-2zM3 24h3v3h-3zM6 24h3v3h-3zM9 24h2v2h-2zM12 24h3v3h-3zM15 24h3v3h-3zM21 24h2v2h-2zM27 24h3v3h-3zM30 24h3v3h-3zM33 24h3v3h-3zM39 24h3v3h-3zM45 24h2v2h-2zM48 24h3v3h-3zM57 24h3v3h-3zM69 24h3v3h-3zM72 24h3v3h-3zM75 24h3v3h-3zM78 24h3v3h-3zM81 24h2v2h-2zM0 27h2v2h-2zM3 27h3v3h-3zM6 27h2v2h-2zM9 27h3v3h-3zM12 27h3v3h-3zM15 27h2v2h-2zM18 27h2v2h-2zM21 27h3v3h-3zM27 27h3v3h-3zM30 27h3v3h-3zM33 27h3v3h-3zM36 27h3v3h-3zM42 27h3v3h-3zM45 27h3v3h-3zM48 27h3v3h-3zM51 27h3v3h-3zM57 27h2v2h-2zM66 27h2v2h-2zM69 27h3v3h-3zM72 27h3v3h-3zM78 27h3v3h-3zM81 27h3v3h-3zM84 27h3v3h-3zM0 30h3v3h-3zM3 30h3v3h-3zM12 30h3v3h-3zM24 30h2v2h-2zM27 30h3v3h-3zM33 30h3v3h-3zM36 30h2v2h-2zM39 30h3v3h-3zM42 30h3v3h-3zM48 30h2v2h-2zM51 30h3v3h-3zM54 30h3v3h-3zM57 30h3v3h-3zM60 30h3v3h-3zM63 30h3v3h-3zM69 30h3v3h-3zM72 30h3v3h-3zM75 30h3v3h-3zM78 30h3v3h-3zM84 30h2v2h-2zM87 30h3v3h-3zM0 33h3v3h-3zM3 33h3v3h-3zM15 33h3v3h-3zM21 33h3v3h-3zM24 33h3v3h-3zM33 33h3v3h-3zM36 33h3v3h-3zM39 33h3v3h-3zM42 33h3v3h-3zM45 33h2v2h-2zM48 33h3v3h-3zM51 33h3v3h-3zM54 33h3v3h-3zM57 33h2v2h-2zM60 33h2v2h-2zM69 33h3v3h-3zM87 33h2v2h-2zM0 36h3v3h-3zM3 36h3v3h-3zM6 36h3v3h-3zM9 36h3v3h-3zM15 36h3v3h-3zM18 36h3v3h-3zM21 36h2v2h-2zM27 36h3v3h-3zM30 36h3v3h-3zM33 36h3v3h-3zM36 36h2v2h-2zM42 36h3v3h-3zM45 36h2v2h-2zM48 36h2v2h-2zM54 36h3v3h-3zM60 36h3v3h-3zM63 36h2v2h-2zM69 36h2v2h-2zM72 36h3v3h-3zM78 36h3v3h-3zM84 36h3v3h-3zM87 36h2v2h-2zM0 39h3v3h-3zM3 39h3v3h-3zM6 39h3v3h-3zM12 39h3v3h-3zM15 39h2v2h-2zM24 39h3v3h-3zM27 39h2v2h-2zM30 39h3v3h-3zM33 39h3v3h-3zM42 39h2v2h-2zM45 39h3v3h-3zM57 39h3v3h-3zM60 39h3v3h-3zM63 39h3v3h-3zM66 39h3v3h-3zM69 39h3v3h-3zM72 39h2v2h-2zM75 39h2v2h-2zM0 42h2v2h-2zM3 42h3v3h-3zM9 42h3v3h-3zM12 42h3v3h-3zM15 42h3v3h-3zM24 42h2v2h-2zM27 42h2v2h-2zM30 42h2v2h-2zM51 42h3v3h-3zM54 42h2v2h-2zM57 42h2v2h-2zM60 42h3v3h-3zM63 42h3v3h-3zM66 42h3v3h-3zM75 42h3v3h-3zM78 42h3v3h-3zM81 42h2v2h-2zM84 42h2v2h-2zM87 42h3v3h-3zM0 45h3v3h-3zM6 45h3v3h-3zM12 45h3v3h-3zM15 45h2v2h-2zM24 45h3v3h-3zM27 45h2v2h-2zM30 45h3v3h-3zM33 45h2v2h-2zM36 45h3v3h-3zM39 45h3v3h-3zM42 45h3v3h-3zM45 45h3v3h-3zM57 45h3v3h-3zM66 45h2v2h-2zM75 45h3v3h-3zM81 45h3v3h-3zM84 45h3v3h-3zM87 45h3v3h-3zM0 48h3v3h-3zM30 48h3v3h-3zM33 48h3v3h-3zM36 48h3v3h-3zM45 48h3v3h-3zM48 48h3v3h-3zM51 48h3v3h-3zM54 48h3v3h-3zM57 48h2v2h-2zM63 48h2v2h-2zM69 48h3v3h-3zM72 48h3v3h-3zM81 48h3v3h-3zM84 48h3v3h-3zM0 51h3v3h-3zM3 51h2v2h-2zM6 51h3v3h-3zM9 51h3v3h-3zM15 51h3v3h-3zM18 51h3v3h-3zM24 51h3v3h-3zM30 51h3v3h-3zM36 51h2v2h-2zM39 51h3v3h-3zM42 51h3v3h-3zM45 51h3v3h-3zM48 51h3v3h-3zM54 51h3v3h-3zM57 51h3v3h-3zM66 51h3v3h-3zM69 51h2v2h-2zM72 51h3v3h-3zM84 51h3v3h-3zM0 54h2v2h-2zM9 54h2v2h-2zM18 54h2v2h-2zM21 54h2v2h-2zM27 54h3v3h-3zM30 54h3v3h-3zM33 54h3v3h-3zM36 54h3v3h-3zM39 54h3v3h-3zM42 54h2v2h-2zM48 54h3v3h-3zM57 54h3v3h-3zM60 54h2v2h-2zM66 54h3v3h-3zM69 54h3v3h-3zM75 54h2v2h-2zM78 54h3v3h-3zM87 54h3v3h-3zM3 57h3v3h-3zM6 57h3v3h-3zM12 57h3v3h-3zM15 57h3v3h-3zM21 57h3v3h-3zM27 57h2v2h-2zM30 57h3v3h-3zM33 57h2v2h-2zM36 57h3v3h-3zM39 57h3v3h-3zM42 57h3v3h-3zM45 57h3v3h-3zM54 57h3v3h-3zM69 57h3v3h-3zM75 57h3v3h-3zM81 57h3v3h-3zM87 57h3v3h-3zM3 60h3v3h-3zM6 60h3v3h-3zM9 60h3v3h-3zM12 60h3v3h-3zM15 60h3v3h-3zM21 60h3v3h-3zM30 60h2v2h-2zM36 60h3v3h-3zM39 60h3v3h-3zM45 60h2v2h-2zM48 60h3v3h-3zM51 60h2v2h-2zM54 60h3v3h-3zM57 60h2v2h-2zM60 60h2v2h-2zM63 60h3v3h-3zM66 60h2v2h-2zM69 60h3v3h-3zM72 60h2v2h-2zM75 60h3v3h-3zM81 60h3v3h-3zM84 60h3v3h-3zM3 63h3v3h-3zM9 63h2v2h-2zM12 63h3v3h-3zM15 63h2v2h-2zM18 63h2v2h-2zM21 63h3v3h-3zM24 63h3v3h-3zM30 63h3v3h-3zM33 63h3v3h-3zM36 63h3v3h-3zM42 63h3v3h-3zM45 63h3v3h-3zM48 63h3v3h-3zM54 63h3v3h-3zM57 63h3v3h-3zM63 63h3v3h-3zM66 63h2v2h-2zM72 63h3v3h-3zM75 63h3v3h-3zM81 63h3v3h-3zM0 66h2v2h-2zM3 66h3v3h-3zM12 66h3v3h-3zM18 66h3v3h-3zM24 66h3v3h-3zM27 66h3v3h-3zM30 66h2v2h-2zM33 66h2v2h-2zM36 66h3v3h-3zM39 66h2v2h-2zM48 66h3v3h-3zM51 66h3v3h-3zM54 66h3v3h-3zM57 66h3v3h-3zM60 66h2v2h-2zM66 66h3v3h-3zM72 66h3v3h-3zM75 66h2v2h-2zM78 66h3v3h-3zM81 66h3v3h-3zM87 66h3v3h-3zM0 69h2v2h-2zM3 69h3v3h-3zM9 69h2v2h-2zM12 69h3v3h-3zM15 69h2v2h-2zM18 69h3v3h-3zM24 69h3v3h-3zM27 69h2v2h-2zM30 69h3v3h-3zM36 69h3v3h-3zM39 69h3v3h-3zM45 69h2v2h-2zM48 69h3v3h-3zM51 69h3v3h-3zM54 69h2v2h-2zM57 69h3v3h-3zM60 69h3v3h-3zM63 69h3v3h-3zM66 69h2v2h-2zM69 69h2v2h-2zM72 69h3v3h-3zM78 69h2v2h-2zM84 69h3v3h-3zM0 72h3v3h-3zM3 72h2v2h-2zM6 72h3v3h-3zM15 72h2v2h-2zM18 72h2v2h-2zM24 72h2v2h-2zM30 72h2v2h-2zM33 72h2v2h-2zM36 72h2v2h-2zM39 72h3v3h-3zM42 72h2v2h-2zM51 72h3v3h-3zM54 72h3v3h-3zM57 72h2v2h-2zM63 72h2v2h-2zM69 72h3v3h-3zM72 72h3v3h-3zM75 72h3v3h-3zM78 72h2v2h-2zM81 72h3v3h-3zM84 72h2v2h-2zM87 72h3v3h-3zM3 75h3v3h-3zM6 75h3v3h-3zM12 75h3v3h-3zM15 75h2v2h-2zM18 75h3v3h-3zM21 75h2v2h-2zM24 75h3v3h-3zM27 75h2v2h-2zM39 75h2v2h-2zM45 75h3v3h-3zM54 75h3v3h-3zM57 75h3v3h-3zM60 75h3v3h-3zM63 75h3v3h-3zM66 75h3v3h-3zM72 75h3v3h-3zM84 75h3v3h-3zM87 75h3v3h-3zM0 78h3v3h-3zM27 78h3v3h-3zM39 78h3v3h-3zM42 78h3v3h-3zM51 78h3v3h-3zM57 78h3v3h-3zM60 78h3v3h-3zM63 78h3v3h-3zM66 78h3v3h-3zM69 78h3v3h-3zM72 78h3v3h-3zM81 78h2v2h-2zM84 78h3v3h-3zM87 78h3v3h-3zM0 81h2v2h-2zM3 81h2v2h-2zM6 81h2v2h-2zM9 81h3v3h-3zM12 81h3v3h-3zM15 81h2v2h-2zM18 81h3v3h-3zM24 81h3v3h-3zM27 81h3v3h-3zM30 81h3v3h-3zM36 81h3v3h-3zM45 81h3v3h-3zM48 81h3v3h-3zM51 81h3v3h-3zM60 81h3v3h-3zM63 81h3v3h-3zM66 81h3v3h-3zM69 81h3v3h-3zM75 81h3v3h-3zM78 81h3v3h-3zM84 81h3v3h-3zM87 81h2v2h-2zM0 84h3v3h-3zM3 84h3v3h-3zM6 84h3v3h-3zM12 84h3v3h-3zM15 84h2v2h-2zM18 84h3v3h-3zM21 84h3v3h-3zM27 84h3v3h-3zM30 84h2v2h-2zM33 84h3v3h-3zM39 84h3v3h-3zM42 84h3v3h-3zM45 84h2v2h-2zM48 84h3v3h-3zM51 84h3v3h-3zM54 84h3v3h-3zM60 84h3v3h-3zM69 84h3v3h-3zM75 84h3v3h-3zM78 84h3v3h-3zM81 84h3v3h-3zM87 84h2v2h-2zM3 87h2v2h-2zM6 87h3v3h-3zM9 87h3v3h-3zM12 87h2v2h-2zM15 87h2v2h-2zM24 87h2v2h-2zM30 87h2v2h-2zM36 87h3v3h-3zM39 87h3v3h-3zM45 87h3v3h-3zM48 87h3v3h-3zM51 87h3v3h-3zM54 87h3v3h-3zM63 87h3v3h-3zM66 87h3v3h-3zM75 87h3v3h-3zM78 87h3v3h-3zM84 87h3v3h-3zM87 87h3v3h-3z" fill="#fff"/></pattern><mask id="spM" maskUnits="userSpaceOnUse" x="0" y="0" width="1391" height="1015"><rect width="1391" height="1015" fill="url(#spMp)"/></mask><pattern id="spSp" width="90" height="90" patternUnits="userSpaceOnUse"><path d="M0 0h3v3h-3zM6 0h3v3h-3zM9 0h3v3h-3zM15 0h3v3h-3zM18 0h3v3h-3zM21 0h2v2h-2zM24 0h3v3h-3zM36 0h2v2h-2zM39 0h2v2h-2zM42 0h3v3h-3zM45 0h3v3h-3zM51 0h3v3h-3zM57 0h3v3h-3zM60 0h3v3h-3zM63 0h3v3h-3zM66 0h3v3h-3zM75 0h2v2h-2zM81 0h3v3h-3zM3 3h2v2h-2zM6 3h3v3h-3zM12 3h3v3h-3zM15 3h3v3h-3zM27 3h3v3h-3zM51 3h2v2h-2zM63 3h3v3h-3zM69 3h3v3h-3zM72 3h3v3h-3zM75 3h2v2h-2zM78 3h3v3h-3zM81 3h2v2h-2zM84 3h3v3h-3zM9 6h3v3h-3zM12 6h2v2h-2zM18 6h3v3h-3zM21 6h3v3h-3zM30 6h3v3h-3zM33 6h3v3h-3zM54 6h2v2h-2zM66 6h3v3h-3zM69 6h3v3h-3zM72 6h3v3h-3zM75 6h3v3h-3zM78 6h3v3h-3zM81 6h3v3h-3zM84 6h3v3h-3zM87 6h2v2h-2zM3 9h3v3h-3zM6 9h3v3h-3zM9 9h2v2h-2zM21 9h3v3h-3zM24 9h3v3h-3zM30 9h3v3h-3zM39 9h3v3h-3zM42 9h3v3h-3zM54 9h3v3h-3zM57 9h2v2h-2zM66 9h3v3h-3zM87 9h3v3h-3zM0 12h3v3h-3zM3 12h3v3h-3zM6 12h3v3h-3zM12 12h2v2h-2zM21 12h3v3h-3zM24 12h3v3h-3zM27 12h3v3h-3zM45 12h3v3h-3zM60 12h2v2h-2zM63 12h2v2h-2zM69 12h3v3h-3zM78 12h3v3h-3zM81 12h2v2h-2zM87 12h2v2h-2zM6 15h3v3h-3zM9 15h3v3h-3zM24 15h2v2h-2zM30 15h3v3h-3zM33 15h3v3h-3zM39 15h3v3h-3zM42 15h2v2h-2zM45 15h3v3h-3zM54 15h2v2h-2zM66 15h3v3h-3zM69 15h3v3h-3zM75 15h3v3h-3zM84 15h3v3h-3zM3 18h3v3h-3zM6 18h3v3h-3zM24 18h3v3h-3zM57 18h3v3h-3zM66 18h3v3h-3zM69 18h3v3h-3zM72 18h3v3h-3zM84 18h2v2h-2zM0 21h2v2h-2zM6 21h2v2h-2zM9 21h3v3h-3zM18 21h3v3h-3zM24 21h3v3h-3zM27 21h2v2h-2zM30 21h3v3h-3zM33 21h3v3h-3zM36 21h3v3h-3zM42 21h2v2h-2zM51 21h3v3h-3zM54 21h2v2h-2zM57 21h3v3h-3zM60 21h2v2h-2zM66 21h3v3h-3zM78 21h3v3h-3zM84 21h3v3h-3zM6 24h2v2h-2zM9 24h2v2h-2zM15 24h3v3h-3zM21 24h3v3h-3zM27 24h3v3h-3zM30 24h3v3h-3zM33 24h3v3h-3zM36 24h2v2h-2zM39 24h3v3h-3zM42 24h3v3h-3zM45 24h3v3h-3zM48 24h2v2h-2zM54 24h3v3h-3zM60 24h2v2h-2zM63 24h3v3h-3zM69 24h3v3h-3zM78 24h2v2h-2zM87 24h3v3h-3zM0 27h3v3h-3zM3 27h2v2h-2zM6 27h3v3h-3zM9 27h2v2h-2zM18 27h3v3h-3zM21 27h3v3h-3zM24 27h3v3h-3zM27 27h2v2h-2zM36 27h2v2h-2zM39 27h3v3h-3zM42 27h3v3h-3zM51 27h3v3h-3zM54 27h3v3h-3zM57 27h3v3h-3zM60 27h3v3h-3zM63 27h3v3h-3zM84 27h3v3h-3zM0 30h2v2h-2zM6 30h2v2h-2zM21 30h3v3h-3zM48 30h3v3h-3zM51 30h3v3h-3zM54 30h2v2h-2zM72 30h2v2h-2zM87 30h2v2h-2zM0 33h3v3h-3zM3 33h2v2h-2zM6 33h2v2h-2zM15 33h3v3h-3zM30 33h3v3h-3zM33 33h2v2h-2zM36 33h3v3h-3zM39 33h3v3h-3zM42 33h3v3h-3zM51 33h3v3h-3zM60 33h2v2h-2zM63 33h2v2h-2zM69 33h3v3h-3zM78 33h3v3h-3zM81 33h2v2h-2zM84 33h3v3h-3zM87 33h3v3h-3zM3 36h2v2h-2zM15 36h2v2h-2zM21 36h3v3h-3zM30 36h3v3h-3zM33 36h3v3h-3zM39 36h2v2h-2zM45 36h2v2h-2zM54 36h3v3h-3zM57 36h2v2h-2zM63 36h3v3h-3zM66 36h3v3h-3zM69 36h2v2h-2zM72 36h2v2h-2zM75 36h3v3h-3zM81 36h3v3h-3zM18 39h2v2h-2zM30 39h3v3h-3zM36 39h3v3h-3zM39 39h3v3h-3zM48 39h3v3h-3zM51 39h3v3h-3zM54 39h3v3h-3zM57 39h3v3h-3zM66 39h2v2h-2zM72 39h3v3h-3zM75 39h3v3h-3zM78 39h3v3h-3zM81 39h3v3h-3zM3 42h3v3h-3zM9 42h3v3h-3zM12 42h3v3h-3zM18 42h3v3h-3zM27 42h3v3h-3zM30 42h3v3h-3zM33 42h2v2h-2zM42 42h3v3h-3zM57 42h3v3h-3zM72 42h3v3h-3zM75 42h3v3h-3zM9 45h2v2h-2zM12 45h2v2h-2zM18 45h3v3h-3zM21 45h3v3h-3zM27 45h3v3h-3zM36 45h3v3h-3zM42 45h3v3h-3zM60 45h3v3h-3zM69 45h3v3h-3zM78 45h3v3h-3zM87 45h3v3h-3zM0 48h3v3h-3zM6 48h2v2h-2zM15 48h2v2h-2zM18 48h2v2h-2zM21 48h3v3h-3zM27 48h2v2h-2zM33 48h3v3h-3zM36 48h3v3h-3zM42 48h3v3h-3zM45 48h2v2h-2zM48 48h3v3h-3zM51 48h3v3h-3zM69 48h3v3h-3zM78 48h3v3h-3zM81 48h3v3h-3zM84 48h3v3h-3zM87 48h3v3h-3zM0 51h2v2h-2zM3 51h2v2h-2zM6 51h3v3h-3zM15 51h3v3h-3zM21 51h2v2h-2zM24 51h3v3h-3zM30 51h3v3h-3zM39 51h3v3h-3zM42 51h2v2h-2zM45 51h2v2h-2zM51 51h3v3h-3zM60 51h2v2h-2zM63 51h3v3h-3zM66 51h2v2h-2zM78 51h3v3h-3zM0 54h3v3h-3zM3 54h3v3h-3zM9 54h2v2h-2zM24 54h3v3h-3zM27 54h2v2h-2zM30 54h3v3h-3zM36 54h3v3h-3zM39 54h3v3h-3zM42 54h2v2h-2zM51 54h3v3h-3zM54 54h3v3h-3zM60 54h3v3h-3zM63 54h3v3h-3zM78 54h2v2h-2zM81 54h3v3h-3zM84 54h2v2h-2zM87 54h3v3h-3zM0 57h3v3h-3zM9 57h3v3h-3zM18 57h2v2h-2zM27 57h3v3h-3zM39 57h3v3h-3zM42 57h3v3h-3zM54 57h2v2h-2zM57 57h3v3h-3zM66 57h3v3h-3zM72 57h3v3h-3zM75 57h3v3h-3zM78 57h3v3h-3zM84 57h3v3h-3zM87 57h3v3h-3zM0 60h3v3h-3zM3 60h2v2h-2zM9 60h3v3h-3zM12 60h3v3h-3zM18 60h3v3h-3zM24 60h3v3h-3zM27 60h2v2h-2zM30 60h3v3h-3zM33 60h3v3h-3zM42 60h3v3h-3zM48 60h3v3h-3zM54 60h2v2h-2zM57 60h2v2h-2zM63 60h3v3h-3zM75 60h3v3h-3zM78 60h3v3h-3zM81 60h3v3h-3zM0 63h3v3h-3zM9 63h3v3h-3zM21 63h2v2h-2zM24 63h2v2h-2zM33 63h2v2h-2zM36 63h3v3h-3zM45 63h3v3h-3zM48 63h3v3h-3zM51 63h3v3h-3zM54 63h2v2h-2zM60 63h3v3h-3zM66 63h2v2h-2zM69 63h3v3h-3zM78 63h3v3h-3zM84 63h3v3h-3zM87 63h3v3h-3zM0 66h3v3h-3zM6 66h2v2h-2zM15 66h3v3h-3zM18 66h3v3h-3zM21 66h3v3h-3zM24 66h3v3h-3zM27 66h3v3h-3zM30 66h2v2h-2zM39 66h3v3h-3zM42 66h2v2h-2zM45 66h2v2h-2zM57 66h2v2h-2zM69 66h2v2h-2zM75 66h3v3h-3zM81 66h2v2h-2zM84 66h2v2h-2zM87 66h3v3h-3zM3 69h3v3h-3zM9 69h3v3h-3zM12 69h3v3h-3zM24 69h2v2h-2zM27 69h3v3h-3zM33 69h2v2h-2zM45 69h2v2h-2zM51 69h2v2h-2zM54 69h2v2h-2zM60 69h2v2h-2zM63 69h3v3h-3zM69 69h2v2h-2zM72 69h3v3h-3zM84 69h3v3h-3zM87 69h3v3h-3zM3 72h3v3h-3zM9 72h3v3h-3zM15 72h3v3h-3zM18 72h3v3h-3zM21 72h3v3h-3zM30 72h3v3h-3zM36 72h2v2h-2zM39 72h3v3h-3zM42 72h3v3h-3zM51 72h3v3h-3zM54 72h3v3h-3zM60 72h3v3h-3zM63 72h2v2h-2zM69 72h2v2h-2zM72 72h3v3h-3zM75 72h3v3h-3zM78 72h2v2h-2zM81 72h3v3h-3zM87 72h3v3h-3zM12 75h3v3h-3zM15 75h3v3h-3zM27 75h2v2h-2zM42 75h3v3h-3zM45 75h3v3h-3zM48 75h2v2h-2zM60 75h3v3h-3zM63 75h2v2h-2zM69 75h3v3h-3zM75 75h2v2h-2zM78 75h3v3h-3zM81 75h2v2h-2zM0 78h2v2h-2zM3 78h3v3h-3zM33 78h2v2h-2zM39 78h3v3h-3zM45 78h2v2h-2zM48 78h3v3h-3zM51 78h2v2h-2zM54 78h3v3h-3zM57 78h3v3h-3zM72 78h3v3h-3zM75 78h2v2h-2zM84 78h2v2h-2zM3 81h3v3h-3zM6 81h3v3h-3zM24 81h3v3h-3zM27 81h2v2h-2zM30 81h3v3h-3zM33 81h3v3h-3zM36 81h3v3h-3zM42 81h3v3h-3zM57 81h3v3h-3zM60 81h2v2h-2zM63 81h2v2h-2zM69 81h2v2h-2zM72 81h2v2h-2zM75 81h3v3h-3zM78 81h2v2h-2zM84 81h3v3h-3zM3 84h3v3h-3zM6 84h2v2h-2zM9 84h2v2h-2zM12 84h3v3h-3zM21 84h3v3h-3zM24 84h2v2h-2zM36 84h3v3h-3zM39 84h2v2h-2zM42 84h2v2h-2zM45 84h3v3h-3zM48 84h2v2h-2zM54 84h2v2h-2zM57 84h3v3h-3zM72 84h3v3h-3zM75 84h2v2h-2zM84 84h3v3h-3zM3 87h3v3h-3zM9 87h3v3h-3zM12 87h2v2h-2zM18 87h3v3h-3zM21 87h3v3h-3zM27 87h3v3h-3zM30 87h2v2h-2zM36 87h2v2h-2zM39 87h3v3h-3zM51 87h3v3h-3zM57 87h3v3h-3zM60 87h3v3h-3zM63 87h2v2h-2zM78 87h3v3h-3zM81 87h2v2h-2zM87 87h3v3h-3z" fill="#fff"/></pattern><mask id="spS" maskUnits="userSpaceOnUse" x="0" y="0" width="1391" height="1015"><rect width="1391" height="1015" fill="url(#spSp)"/></mask><pattern id="spVp" width="90" height="90" patternUnits="userSpaceOnUse"><path d="M0 0h3v3h-3zM6 0h3v3h-3zM9 0h3v3h-3zM12 0h3v3h-3zM15 0h3v3h-3zM18 0h3v3h-3zM21 0h3v3h-3zM24 0h2v2h-2zM30 0h3v3h-3zM33 0h3v3h-3zM36 0h3v3h-3zM39 0h3v3h-3zM42 0h3v3h-3zM45 0h2v2h-2zM48 0h3v3h-3zM51 0h3v3h-3zM54 0h3v3h-3zM63 0h2v2h-2zM66 0h3v3h-3zM69 0h3v3h-3zM72 0h3v3h-3zM75 0h3v3h-3zM81 0h3v3h-3zM84 0h2v2h-2zM87 0h2v2h-2zM0 3h3v3h-3zM3 3h2v2h-2zM6 3h3v3h-3zM9 3h2v2h-2zM12 3h3v3h-3zM15 3h3v3h-3zM18 3h2v2h-2zM21 3h3v3h-3zM24 3h3v3h-3zM27 3h3v3h-3zM30 3h3v3h-3zM33 3h3v3h-3zM36 3h2v2h-2zM39 3h3v3h-3zM45 3h3v3h-3zM48 3h3v3h-3zM51 3h2v2h-2zM54 3h3v3h-3zM57 3h3v3h-3zM60 3h3v3h-3zM63 3h3v3h-3zM66 3h3v3h-3zM69 3h3v3h-3zM75 3h3v3h-3zM78 3h3v3h-3zM81 3h2v2h-2zM84 3h3v3h-3zM87 3h2v2h-2zM3 6h2v2h-2zM9 6h3v3h-3zM12 6h3v3h-3zM18 6h2v2h-2zM21 6h2v2h-2zM24 6h3v3h-3zM27 6h2v2h-2zM30 6h3v3h-3zM33 6h2v2h-2zM36 6h3v3h-3zM42 6h3v3h-3zM45 6h3v3h-3zM48 6h3v3h-3zM51 6h3v3h-3zM54 6h3v3h-3zM63 6h3v3h-3zM66 6h3v3h-3zM69 6h3v3h-3zM75 6h2v2h-2zM78 6h3v3h-3zM81 6h2v2h-2zM84 6h2v2h-2zM87 6h3v3h-3zM0 9h2v2h-2zM3 9h2v2h-2zM6 9h2v2h-2zM9 9h3v3h-3zM15 9h3v3h-3zM18 9h2v2h-2zM21 9h3v3h-3zM24 9h3v3h-3zM27 9h3v3h-3zM30 9h2v2h-2zM33 9h2v2h-2zM36 9h2v2h-2zM39 9h3v3h-3zM42 9h3v3h-3zM45 9h3v3h-3zM48 9h3v3h-3zM51 9h3v3h-3zM54 9h3v3h-3zM60 9h3v3h-3zM63 9h3v3h-3zM66 9h3v3h-3zM72 9h3v3h-3zM78 9h3v3h-3zM81 9h3v3h-3zM84 9h2v2h-2zM0 12h3v3h-3zM3 12h3v3h-3zM6 12h2v2h-2zM9 12h2v2h-2zM15 12h3v3h-3zM18 12h3v3h-3zM21 12h3v3h-3zM24 12h3v3h-3zM27 12h2v2h-2zM33 12h3v3h-3zM36 12h2v2h-2zM39 12h2v2h-2zM42 12h3v3h-3zM45 12h3v3h-3zM48 12h3v3h-3zM51 12h2v2h-2zM54 12h3v3h-3zM57 12h3v3h-3zM60 12h3v3h-3zM63 12h2v2h-2zM69 12h3v3h-3zM72 12h3v3h-3zM75 12h3v3h-3zM78 12h3v3h-3zM81 12h3v3h-3zM84 12h3v3h-3zM87 12h2v2h-2zM0 15h2v2h-2zM6 15h2v2h-2zM9 15h3v3h-3zM12 15h3v3h-3zM18 15h3v3h-3zM21 15h2v2h-2zM27 15h3v3h-3zM30 15h2v2h-2zM33 15h3v3h-3zM36 15h3v3h-3zM48 15h2v2h-2zM51 15h2v2h-2zM54 15h3v3h-3zM57 15h3v3h-3zM60 15h2v2h-2zM63 15h3v3h-3zM66 15h3v3h-3zM69 15h3v3h-3zM72 15h2v2h-2zM75 15h3v3h-3zM78 15h2v2h-2zM81 15h3v3h-3zM87 15h2v2h-2zM0 18h3v3h-3zM3 18h3v3h-3zM6 18h3v3h-3zM9 18h2v2h-2zM12 18h3v3h-3zM15 18h2v2h-2zM21 18h2v2h-2zM27 18h3v3h-3zM30 18h3v3h-3zM33 18h3v3h-3zM36 18h2v2h-2zM39 18h3v3h-3zM42 18h3v3h-3zM45 18h3v3h-3zM48 18h3v3h-3zM51 18h2v2h-2zM57 18h3v3h-3zM60 18h3v3h-3zM63 18h2v2h-2zM66 18h3v3h-3zM69 18h3v3h-3zM75 18h2v2h-2zM78 18h3v3h-3zM81 18h3v3h-3zM84 18h3v3h-3zM87 18h3v3h-3zM0 21h3v3h-3zM3 21h3v3h-3zM6 21h3v3h-3zM9 21h3v3h-3zM12 21h3v3h-3zM15 21h3v3h-3zM18 21h3v3h-3zM21 21h2v2h-2zM24 21h2v2h-2zM27 21h2v2h-2zM30 21h2v2h-2zM33 21h3v3h-3zM39 21h2v2h-2zM45 21h3v3h-3zM48 21h3v3h-3zM51 21h2v2h-2zM54 21h2v2h-2zM57 21h3v3h-3zM60 21h3v3h-3zM63 21h3v3h-3zM72 21h3v3h-3zM75 21h3v3h-3zM78 21h3v3h-3zM81 21h3v3h-3zM84 21h3v3h-3zM87 21h3v3h-3zM0 24h3v3h-3zM3 24h2v2h-2zM12 24h3v3h-3zM18 24h2v2h-2zM21 24h3v3h-3zM24 24h3v3h-3zM27 24h3v3h-3zM30 24h2v2h-2zM33 24h3v3h-3zM36 24h3v3h-3zM39 24h3v3h-3zM42 24h3v3h-3zM48 24h2v2h-2zM51 24h3v3h-3zM54 24h3v3h-3zM57 24h2v2h-2zM60 24h3v3h-3zM66 24h2v2h-2zM69 24h3v3h-3zM75 24h3v3h-3zM78 24h2v2h-2zM81 24h2v2h-2zM84 24h3v3h-3zM87 24h3v3h-3zM0 27h3v3h-3zM3 27h3v3h-3zM9 27h3v3h-3zM12 27h3v3h-3zM15 27h3v3h-3zM21 27h2v2h-2zM24 27h2v2h-2zM27 27h3v3h-3zM30 27h3v3h-3zM33 27h3v3h-3zM36 27h3v3h-3zM39 27h3v3h-3zM45 27h3v3h-3zM51 27h2v2h-2zM54 27h2v2h-2zM57 27h3v3h-3zM60 27h3v3h-3zM66 27h3v3h-3zM69 27h3v3h-3zM72 27h3v3h-3zM78 27h3v3h-3zM81 27h3v3h-3zM84 27h3v3h-3zM87 27h3v3h-3zM0 30h3v3h-3zM3 30h3v3h-3zM6 30h3v3h-3zM9 30h3v3h-3zM15 30h3v3h-3zM24 30h2v2h-2zM27 30h3v3h-3zM33 30h3v3h-3zM39 30h3v3h-3zM45 30h3v3h-3zM48 30h3v3h-3zM51 30h3v3h-3zM54 30h3v3h-3zM57 30h3v3h-3zM60 30h3v3h-3zM63 30h3v3h-3zM66 30h2v2h-2zM69 30h2v2h-2zM75 30h3v3h-3zM78 30h2v2h-2zM81 30h3v3h-3zM84 30h3v3h-3zM87 30h3v3h-3zM0 33h3v3h-3zM3 33h3v3h-3zM6 33h2v2h-2zM12 33h3v3h-3zM15 33h3v3h-3zM18 33h3v3h-3zM21 33h3v3h-3zM24 33h3v3h-3zM27 33h3v3h-3zM30 33h3v3h-3zM33 33h3v3h-3zM36 33h2v2h-2zM39 33h3v3h-3zM42 33h2v2h-2zM45 33h2v2h-2zM48 33h3v3h-3zM51 33h2v2h-2zM54 33h3v3h-3zM60 33h3v3h-3zM63 33h2v2h-2zM66 33h3v3h-3zM69 33h2v2h-2zM72 33h3v3h-3zM75 33h3v3h-3zM78 33h3v3h-3zM81 33h3v3h-3zM84 33h3v3h-3zM87 33h3v3h-3zM0 36h3v3h-3zM3 36h3v3h-3zM6 36h2v2h-2zM9 36h3v3h-3zM12 36h3v3h-3zM24 36h2v2h-2zM27 36h3v3h-3zM30 36h2v2h-2zM36 36h3v3h-3zM39 36h3v3h-3zM42 36h3v3h-3zM45 36h3v3h-3zM48 36h3v3h-3zM51 36h3v3h-3zM54 36h2v2h-2zM60 36h3v3h-3zM63 36h3v3h-3zM66 36h2v2h-2zM69 36h2v2h-2zM72 36h3v3h-3zM75 36h3v3h-3zM78 36h2v2h-2zM84 36h3v3h-3zM87 36h2v2h-2zM0 39h3v3h-3zM3 39h2v2h-2zM6 39h2v2h-2zM9 39h3v3h-3zM15 39h3v3h-3zM18 39h2v2h-2zM21 39h2v2h-2zM24 39h2v2h-2zM27 39h2v2h-2zM30 39h2v2h-2zM39 39h3v3h-3zM42 39h2v2h-2zM45 39h3v3h-3zM48 39h2v2h-2zM54 39h3v3h-3zM57 39h3v3h-3zM60 39h2v2h-2zM63 39h3v3h-3zM66 39h3v3h-3zM69 39h3v3h-3zM72 39h3v3h-3zM75 39h2v2h-2zM78 39h3v3h-3zM81 39h3v3h-3zM84 39h2v2h-2zM87 39h3v3h-3zM0 42h3v3h-3zM3 42h2v2h-2zM6 42h3v3h-3zM9 42h3v3h-3zM12 42h2v2h-2zM18 42h3v3h-3zM24 42h3v3h-3zM27 42h2v2h-2zM30 42h3v3h-3zM33 42h3v3h-3zM36 42h2v2h-2zM39 42h3v3h-3zM42 42h3v3h-3zM45 42h2v2h-2zM48 42h3v3h-3zM51 42h3v3h-3zM54 42h3v3h-3zM57 42h3v3h-3zM60 42h2v2h-2zM63 42h3v3h-3zM66 42h2v2h-2zM69 42h2v2h-2zM72 42h2v2h-2zM75 42h3v3h-3zM78 42h3v3h-3zM81 42h3v3h-3zM87 42h2v2h-2zM0 45h2v2h-2zM3 45h2v2h-2zM6 45h2v2h-2zM9 45h3v3h-3zM12 45h3v3h-3zM15 45h3v3h-3zM18 45h3v3h-3zM21 45h3v3h-3zM24 45h3v3h-3zM27 45h3v3h-3zM30 45h3v3h-3zM36 45h3v3h-3zM39 45h3v3h-3zM42 45h3v3h-3zM45 45h3v3h-3zM48 45h2v2h-2zM51 45h3v3h-3zM54 45h3v3h-3zM57 45h3v3h-3zM60 45h3v3h-3zM63 45h3v3h-3zM66 45h3v3h-3zM69 45h3v3h-3zM75 45h2v2h-2zM78 45h2v2h-2zM81 45h3v3h-3zM84 45h3v3h-3zM87 45h3v3h-3zM0 48h2v2h-2zM3 48h3v3h-3zM6 48h3v3h-3zM9 48h3v3h-3zM12 48h2v2h-2zM15 48h3v3h-3zM18 48h2v2h-2zM21 48h3v3h-3zM24 48h3v3h-3zM27 48h3v3h-3zM30 48h2v2h-2zM33 48h3v3h-3zM36 48h3v3h-3zM39 48h3v3h-3zM42 48h3v3h-3zM45 48h3v3h-3zM48 48h2v2h-2zM51 48h3v3h-3zM54 48h2v2h-2zM57 48h3v3h-3zM60 48h3v3h-3zM63 48h2v2h-2zM66 48h2v2h-2zM69 48h3v3h-3zM75 48h3v3h-3zM78 48h3v3h-3zM81 48h3v3h-3zM84 48h2v2h-2zM87 48h3v3h-3zM0 51h2v2h-2zM3 51h2v2h-2zM6 51h3v3h-3zM9 51h3v3h-3zM18 51h3v3h-3zM21 51h2v2h-2zM24 51h2v2h-2zM27 51h3v3h-3zM30 51h3v3h-3zM33 51h3v3h-3zM36 51h3v3h-3zM45 51h3v3h-3zM48 51h2v2h-2zM51 51h3v3h-3zM54 51h3v3h-3zM57 51h3v3h-3zM60 51h3v3h-3zM63 51h3v3h-3zM66 51h3v3h-3zM69 51h3v3h-3zM72 51h3v3h-3zM75 51h3v3h-3zM81 51h3v3h-3zM84 51h3v3h-3zM87 51h2v2h-2zM0 54h3v3h-3zM6 54h2v2h-2zM9 54h3v3h-3zM12 54h2v2h-2zM15 54h3v3h-3zM18 54h2v2h-2zM21 54h3v3h-3zM24 54h2v2h-2zM27 54h3v3h-3zM30 54h3v3h-3zM33 54h3v3h-3zM36 54h3v3h-3zM39 54h3v3h-3zM42 54h3v3h-3zM45 54h3v3h-3zM48 54h3v3h-3zM51 54h3v3h-3zM60 54h2v2h-2zM63 54h2v2h-2zM66 54h2v2h-2zM69 54h2v2h-2zM72 54h2v2h-2zM75 54h3v3h-3zM81 54h3v3h-3zM84 54h3v3h-3zM87 54h2v2h-2zM0 57h3v3h-3zM3 57h3v3h-3zM6 57h3v3h-3zM12 57h3v3h-3zM21 57h3v3h-3zM24 57h2v2h-2zM30 57h2v2h-2zM33 57h3v3h-3zM36 57h2v2h-2zM42 57h3v3h-3zM45 57h2v2h-2zM48 57h3v3h-3zM51 57h3v3h-3zM57 57h2v2h-2zM60 57h3v3h-3zM66 57h3v3h-3zM69 57h3v3h-3zM72 57h3v3h-3zM75 57h3v3h-3zM78 57h2v2h-2zM81 57h3v3h-3zM87 57h3v3h-3zM0 60h2v2h-2zM3 60h3v3h-3zM6 60h3v3h-3zM12 60h3v3h-3zM15 60h3v3h-3zM18 60h3v3h-3zM21 60h2v2h-2zM24 60h3v3h-3zM27 60h3v3h-3zM30 60h3v3h-3zM33 60h2v2h-2zM39 60h3v3h-3zM42 60h3v3h-3zM48 60h3v3h-3zM51 60h3v3h-3zM54 60h3v3h-3zM57 60h3v3h-3zM60 60h2v2h-2zM63 60h3v3h-3zM69 60h2v2h-2zM72 60h3v3h-3zM75 60h3v3h-3zM78 60h2v2h-2zM81 60h3v3h-3zM84 60h3v3h-3zM87 60h3v3h-3zM0 63h3v3h-3zM3 63h3v3h-3zM6 63h3v3h-3zM9 63h3v3h-3zM12 63h3v3h-3zM15 63h3v3h-3zM18 63h3v3h-3zM24 63h3v3h-3zM27 63h3v3h-3zM30 63h3v3h-3zM33 63h3v3h-3zM36 63h3v3h-3zM39 63h3v3h-3zM42 63h2v2h-2zM45 63h3v3h-3zM48 63h3v3h-3zM51 63h2v2h-2zM54 63h3v3h-3zM57 63h3v3h-3zM63 63h3v3h-3zM66 63h2v2h-2zM69 63h3v3h-3zM72 63h3v3h-3zM75 63h2v2h-2zM78 63h3v3h-3zM81 63h3v3h-3zM84 63h3v3h-3zM0 66h2v2h-2zM3 66h3v3h-3zM6 66h3v3h-3zM9 66h2v2h-2zM12 66h3v3h-3zM18 66h3v3h-3zM21 66h3v3h-3zM24 66h3v3h-3zM27 66h2v2h-2zM30 66h2v2h-2zM33 66h3v3h-3zM36 66h3v3h-3zM39 66h3v3h-3zM42 66h3v3h-3zM45 66h3v3h-3zM48 66h3v3h-3zM51 66h3v3h-3zM54 66h2v2h-2zM57 66h2v2h-2zM60 66h3v3h-3zM63 66h3v3h-3zM66 66h3v3h-3zM69 66h3v3h-3zM72 66h3v3h-3zM78 66h3v3h-3zM81 66h3v3h-3zM87 66h2v2h-2zM0 69h2v2h-2zM3 69h3v3h-3zM6 69h3v3h-3zM12 69h2v2h-2zM15 69h3v3h-3zM18 69h3v3h-3zM21 69h3v3h-3zM24 69h3v3h-3zM27 69h3v3h-3zM30 69h3v3h-3zM33 69h3v3h-3zM36 69h3v3h-3zM39 69h3v3h-3zM42 69h2v2h-2zM45 69h3v3h-3zM48 69h3v3h-3zM51 69h3v3h-3zM54 69h3v3h-3zM57 69h3v3h-3zM60 69h2v2h-2zM66 69h3v3h-3zM72 69h3v3h-3zM75 69h2v2h-2zM78 69h3v3h-3zM81 69h3v3h-3zM84 69h3v3h-3zM87 69h3v3h-3zM0 72h3v3h-3zM3 72h3v3h-3zM6 72h3v3h-3zM9 72h3v3h-3zM12 72h3v3h-3zM15 72h3v3h-3zM18 72h3v3h-3zM21 72h3v3h-3zM24 72h3v3h-3zM27 72h3v3h-3zM30 72h3v3h-3zM33 72h3v3h-3zM36 72h3v3h-3zM39 72h3v3h-3zM42 72h3v3h-3zM48 72h3v3h-3zM51 72h3v3h-3zM54 72h3v3h-3zM60 72h3v3h-3zM66 72h3v3h-3zM69 72h3v3h-3zM72 72h3v3h-3zM75 72h2v2h-2zM78 72h2v2h-2zM81 72h3v3h-3zM84 72h3v3h-3zM87 72h2v2h-2zM0 75h3v3h-3zM3 75h3v3h-3zM6 75h3v3h-3zM9 75h3v3h-3zM12 75h3v3h-3zM15 75h3v3h-3zM18 75h3v3h-3zM21 75h2v2h-2zM24 75h3v3h-3zM30 75h2v2h-2zM33 75h3v3h-3zM39 75h3v3h-3zM42 75h3v3h-3zM45 75h3v3h-3zM48 75h2v2h-2zM51 75h3v3h-3zM54 75h3v3h-3zM57 75h3v3h-3zM60 75h3v3h-3zM63 75h3v3h-3zM66 75h3v3h-3zM69 75h2v2h-2zM72 75h3v3h-3zM75 75h2v2h-2zM78 75h3v3h-3zM81 75h2v2h-2zM84 75h2v2h-2zM87 75h2v2h-2zM0 78h3v3h-3zM3 78h2v2h-2zM6 78h3v3h-3zM9 78h2v2h-2zM12 78h2v2h-2zM15 78h3v3h-3zM18 78h3v3h-3zM21 78h3v3h-3zM24 78h3v3h-3zM33 78h3v3h-3zM36 78h3v3h-3zM39 78h2v2h-2zM45 78h2v2h-2zM48 78h3v3h-3zM51 78h2v2h-2zM57 78h3v3h-3zM60 78h3v3h-3zM63 78h3v3h-3zM66 78h2v2h-2zM69 78h3v3h-3zM72 78h3v3h-3zM75 78h2v2h-2zM78 78h3v3h-3zM81 78h2v2h-2zM84 78h3v3h-3zM87 78h2v2h-2zM0 81h3v3h-3zM3 81h3v3h-3zM6 81h3v3h-3zM9 81h3v3h-3zM12 81h3v3h-3zM15 81h3v3h-3zM18 81h3v3h-3zM21 81h2v2h-2zM24 81h3v3h-3zM27 81h3v3h-3zM33 81h2v2h-2zM36 81h3v3h-3zM39 81h3v3h-3zM42 81h3v3h-3zM45 81h3v3h-3zM48 81h2v2h-2zM51 81h2v2h-2zM54 81h2v2h-2zM57 81h3v3h-3zM60 81h3v3h-3zM63 81h3v3h-3zM66 81h2v2h-2zM69 81h3v3h-3zM72 81h3v3h-3zM78 81h3v3h-3zM81 81h2v2h-2zM84 81h3v3h-3zM87 81h2v2h-2zM0 84h2v2h-2zM3 84h2v2h-2zM6 84h2v2h-2zM9 84h2v2h-2zM12 84h3v3h-3zM15 84h3v3h-3zM18 84h3v3h-3zM21 84h3v3h-3zM24 84h3v3h-3zM27 84h2v2h-2zM30 84h3v3h-3zM33 84h2v2h-2zM36 84h2v2h-2zM39 84h3v3h-3zM42 84h3v3h-3zM45 84h3v3h-3zM48 84h3v3h-3zM51 84h3v3h-3zM54 84h3v3h-3zM60 84h2v2h-2zM63 84h2v2h-2zM66 84h2v2h-2zM69 84h2v2h-2zM72 84h3v3h-3zM75 84h3v3h-3zM78 84h3v3h-3zM84 84h3v3h-3zM87 84h2v2h-2zM0 87h3v3h-3zM3 87h3v3h-3zM6 87h3v3h-3zM12 87h3v3h-3zM15 87h3v3h-3zM18 87h2v2h-2zM21 87h3v3h-3zM24 87h3v3h-3zM27 87h3v3h-3zM30 87h3v3h-3zM33 87h3v3h-3zM36 87h3v3h-3zM39 87h3v3h-3zM45 87h3v3h-3zM51 87h3v3h-3zM54 87h2v2h-2zM57 87h2v2h-2zM60 87h2v2h-2zM63 87h3v3h-3zM66 87h3v3h-3zM72 87h2v2h-2zM75 87h2v2h-2zM78 87h2v2h-2zM81 87h3v3h-3zM84 87h3v3h-3zM87 87h2v2h-2z" fill="#fff"/></pattern><mask id="spV" maskUnits="userSpaceOnUse" x="0" y="0" width="1391" height="1015"><rect width="1391" height="1015" fill="url(#spVp)"/></mask><linearGradient id="gyg" gradientUnits="userSpaceOnUse" x1="253.5" y1="475.0" x2="291.0" y2="520.0"><stop offset="0" stop-color="#60f000"/><stop offset="1" stop-color="#b8f000"/></linearGradient><linearGradient id="ceil" gradientUnits="userSpaceOnUse" x1="360.0" y1="0.0" x2="932.0" y2="0.0"><stop offset="0" stop-color="#2ee020"/><stop offset="0.35" stop-color="#58e800"/><stop offset="0.75" stop-color="#a8f000"/><stop offset="1" stop-color="#c4f000"/></linearGradient><linearGradient id="rwall" gradientUnits="userSpaceOnUse" x1="932.0" y1="0.0" x2="1091.0" y2="0.0"><stop offset="0" stop-color="#b0f000"/><stop offset="0.45" stop-color="#f0f000"/><stop offset="1" stop-color="#f89800"/></linearGradient><linearGradient id="rwall" gradientUnits="userSpaceOnUse" x1="916.0" y1="0.0" x2="1091.0" y2="0.0"><stop offset="0" stop-color="#ccf200"/><stop offset="0.5" stop-color="#f0f000"/><stop offset="1" stop-color="#f89000"/></linearGradient><linearGradient id="otab" gradientUnits="userSpaceOnUse" x1="971.0" y1="0.0" x2="1136.0" y2="0.0"><stop offset="0" stop-color="#f0b800"/><stop offset="1" stop-color="#ff4800"/></linearGradient><linearGradient id="chair" gradientUnits="userSpaceOnUse" x1="0.0" y1="520.0" x2="0.0" y2="660.0"><stop offset="0" stop-color="#f0f000"/><stop offset="0.7" stop-color="#f0e000"/><stop offset="1" stop-color="#f0a800"/></linearGradient><linearGradient id="chairg" gradientUnits="userSpaceOnUse" x1="0.0" y1="545.0" x2="0.0" y2="660.0"><stop offset="0" stop-color="#f0f000"/><stop offset="0.75" stop-color="#f4e800"/><stop offset="1" stop-color="#f0c000"/></linearGradient><linearGradient id="floor" gradientUnits="userSpaceOnUse" x1="0.0" y1="650.0" x2="0.0" y2="770.0"><stop offset="0" stop-color="#d8f000"/><stop offset="0.35" stop-color="#f0f000"/><stop offset="0.7" stop-color="#ffa000"/><stop offset="1" stop-color="#ff6000"/></linearGradient><linearGradient id="floorv" gradientUnits="userSpaceOnUse" x1="0.0" y1="695.0" x2="0.0" y2="772.0"><stop offset="0" stop-color="#e8f400"/><stop offset="0.3" stop-color="#f4f000"/><stop offset="0.65" stop-color="#ffb000"/><stop offset="1" stop-color="#ff7000"/></linearGradient><linearGradient id="floorh" gradientUnits="userSpaceOnUse" x1="726.0" y1="0.0" x2="1076.0" y2="0.0"><stop offset="0" stop-color="#ff4000"/><stop offset="1" stop-color="#ff4000"/></linearGradient><linearGradient id="floorhm" gradientUnits="userSpaceOnUse" x1="676" y1="0" x2="956" y2="0"><stop offset="0" stop-color="#ff3000" stop-opacity="0"/><stop offset="1" stop-color="#ff3000" stop-opacity="0.9"/></linearGradient><linearGradient id="fadeg" gradientUnits="userSpaceOnUse" x1="0" y1="688" x2="0" y2="738"><stop offset="0" stop-color="#000"/><stop offset="1" stop-color="#fff"/></linearGradient><mask id="fadeTop" maskUnits="userSpaceOnUse" x="0" y="0" width="1391" height="1015"><rect width="1391" height="1015" fill="url(#fadeg)"/></mask><linearGradient id="sofatop" gradientUnits="userSpaceOnUse" x1="0.0" y1="0.0" x2="1200.0" y2="0.0"><stop offset="0" stop-color="#7cf000"/><stop offset="1" stop-color="#a0f000"/></linearGradient><linearGradient id="leg" gradientUnits="userSpaceOnUse" x1="559.0" y1="0.0" x2="626.5" y2="0.0"><stop offset="0" stop-color="#f0f000"/><stop offset="1" stop-color="#f09000"/></linearGradient></defs><polygon points="127.2,358.0 158.5,363.0 160.5,368.0 196.0,369.5 221.5,360.5 223.5,343.0 242.2,343.0 266.0,348.8 341.0,349.5 473.5,353.0 473.5,561.8 394.8,561.8 392.2,405.0 274.8,402.5 272.2,561.8 146.0,561.8 139.8,495.0 141.0,475.0 133.5,470.0" fill="url(#cyan)" stroke="url(#cyan)" stroke-width="1.2" />
<polygon points="257.2,405.0 274.8,405.0 273.5,545.0 259.8,545.0" fill="url(#bluep)" stroke="url(#bluep)" stroke-width="1.2" />
<polygon points="76.0,374.0 102.0,362.0 112.0,470.0 93.0,446.0 72.0,411.0" fill="#22e81e" stroke="#22e81e" stroke-width="1.2" mask="url(#spS)"/>
<polygon points="106.5,363.0 115.0,354.0 136.0,356.0 159.0,364.0 161.0,410.0 157.0,468.0 131.0,472.0 109.0,472.0 102.0,433.0 103.0,390.0" fill="#1eea1a" stroke="#1eea1a" stroke-width="1.2" mask="url(#spD)"/>
<polygon points="108.5,497.5 121.0,491.2 133.5,495.0 141.0,505.0 146.0,530.0 136.0,530.0 126.0,517.5 108.5,500.0" fill="#22dd22" stroke="#22dd22" stroke-width="1.2" />
<polygon points="156.0,495.0 168.5,495.0 173.5,532.5 158.5,532.5" fill="#22dd22" stroke="#22dd22" stroke-width="1.2" opacity="0.8"/>
<polygon points="24.8,456.2 44.8,455.0 43.5,467.5 36.0,473.8 26.0,462.5" fill="#22e81e" stroke="#22e81e" stroke-width="1.2" mask="url(#spM)"/>
<polygon points="224.8,300.0 248.5,293.8 249.8,310.0 244.8,327.5 242.2,345.0 241.0,365.0 238.5,440.0 256.0,445.0 271.0,462.5 273.5,495.0 266.0,520.0 291.0,520.0 291.0,537.5 278.5,545.0 277.2,561.8 211.0,561.8 206.0,532.5 196.0,527.5 193.5,470.0 192.2,395.0 196.0,365.0 211.0,360.0 223.5,355.0 228.5,340.0 226.0,320.0" fill="#0ee60e" stroke="#0ee60e" stroke-width="1.2" />
<polygon points="253.5,475.0 276.0,477.5 279.8,495.0 276.0,517.5 291.0,520.0 291.0,538.8 276.0,545.0 263.5,520.0 256.0,495.0" fill="url(#gyg)" stroke="url(#gyg)" stroke-width="1.2" />
<polygon points="311.0,515.0 341.0,517.5 348.5,527.5 343.5,550.0 348.5,561.8 316.0,561.8 318.5,532.5" fill="#c8f000" stroke="#c8f000" stroke-width="1.2" />
<polygon points="266.0,516.2 311.0,517.5 311.0,521.2 266.0,521.2" fill="#b0f000" stroke="#b0f000" stroke-width="1.2" opacity="0.8"/>
<polygon points="396.0,445.0 416.0,445.0 421.0,460.0 416.0,477.5 396.0,470.0" fill="#00567f" stroke="#00567f" stroke-width="1.2" />
<polygon points="428.5,455.0 441.0,457.5 446.0,475.0 436.0,477.5" fill="#00567f" stroke="#00567f" stroke-width="1.2" />
<polygon points="454.8,457.0 462.7,457.0 462.7,476.5 454.8,476.5" fill="#00567f" stroke="#00567f" stroke-width="1.2" />
<polygon points="394.0,474.0 456.0,474.0 458.0,520.0 448.0,557.0 394.0,557.0" fill="#30e0a0" stroke="#30e0a0" stroke-width="1.2" opacity="0.2"/>
<polygon points="360.0,322.0 424.0,295.0 476.0,294.0 536.0,300.0 706.0,315.0 761.0,352.0 724.0,352.0 649.0,352.0 574.0,351.0 509.0,351.0 442.0,347.0 385.0,334.0" fill="url(#ceil)" stroke="url(#ceil)" stroke-width="1.2" mask="url(#spM)"/>
<polygon points="424.0,293.0 480.0,289.0 538.0,288.0 605.0,293.0 699.0,302.5 799.0,311.0 932.0,321.0 932.0,328.0 911.0,330.0 861.0,334.0 799.0,345.0 761.0,356.0 726.0,340.0 649.0,332.0 574.0,328.0 499.0,326.0 446.0,322.0" fill="url(#ceil)" stroke="url(#ceil)" stroke-width="1.2" mask="url(#spV)"/>
<polygon points="474.0,358.8 511.5,355.0 541.5,353.8 544.0,360.0 624.0,361.2 699.0,366.2 724.0,370.0 726.7,395.8 711.0,439.0 695.2,490.0 699.2,543.5 674.0,543.0 671.6,520.0 659.7,520.0 656.0,547.5 583.0,547.5 584.9,520.0 565.0,520.0 557.3,525.8 551.0,551.0 527.7,551.0 527.7,525.8 494.2,521.9 494.2,545.5 474.0,545.5" fill="url(#cyan)" stroke="url(#cyan)" stroke-width="1.2" />
<polygon points="470.6,522.0 474.0,522.0 474.0,545.5 470.6,545.5" fill="#00567f" stroke="#00567f" stroke-width="1.2" />
<polygon points="731.5,370.0 740.2,370.0 747.8,410.0 746.5,535.0 741.5,535.0 734.0,445.0 729.0,410.0" fill="#20c8b0" stroke="#20c8b0" stroke-width="1.2" mask="url(#spM)"/>
<polygon points="754.0,390.0 762.8,390.0 761.5,520.0 751.5,520.0 749.0,495.0 754.0,445.0" fill="#40d880" stroke="#40d880" stroke-width="1.2" mask="url(#spM)"/>
<polygon points="772.8,407.5 780.2,407.5 781.5,557.5 774.0,557.5" fill="#40d060" stroke="#40d060" stroke-width="1.2" mask="url(#spM)"/>
<polygon points="816.5,357.5 829.0,358.8 826.5,397.5 821.5,395.0" fill="#50e000" stroke="#50e000" stroke-width="1.2" mask="url(#spM)"/>
<polygon points="801.5,425.0 807.8,425.0 809.0,545.0 802.8,545.0" fill="#40e000" stroke="#40e000" stroke-width="1.2" mask="url(#spM)"/>
<polygon points="824.0,400.0 831.5,400.0 839.0,420.0 840.2,557.5 829.0,557.5 824.0,470.0" fill="#60e800" stroke="#60e800" stroke-width="1.2" mask="url(#spM)"/>
<polygon points="859.0,352.5 874.0,352.5 876.5,385.0 861.5,382.5" fill="#80f000" stroke="#80f000" stroke-width="1.2" mask="url(#spM)"/>
<polygon points="861.5,415.0 871.5,415.0 870.2,550.0 859.0,550.0" fill="#90f000" stroke="#90f000" stroke-width="1.2" mask="url(#spM)"/>
<polygon points="889.0,352.5 899.0,352.5 899.0,385.0 889.0,385.0" fill="#a0f000" stroke="#a0f000" stroke-width="1.2" mask="url(#spM)"/>
<polygon points="890.2,395.0 901.5,395.0 904.0,550.0 889.0,550.0" fill="#a8f000" stroke="#a8f000" stroke-width="1.2" mask="url(#spM)"/>
<polygon points="709.0,470.0 726.5,470.0 726.5,525.0 711.5,525.0" fill="#20c8b8" stroke="#20c8b8" stroke-width="1.2" mask="url(#spM)"/>
<polygon points="866.5,552.5 884.0,542.5 899.0,545.0 899.0,561.8 866.5,561.8" fill="#ff1800" stroke="#ff1800" stroke-width="1.2" />
<polygon points="629.0,545.0 771.0,543.0 771.0,554.0 629.0,556.0" fill="#3ae400" stroke="#3ae400" stroke-width="1.2" />
<polygon points="652.0,564.0 792.0,563.0 792.0,574.0 652.0,575.0" fill="#3ae400" stroke="#3ae400" stroke-width="1.2" />
<polygon points="666.0,554.0 674.0,554.0 674.0,564.0 666.0,564.0" fill="#3ae400" stroke="#3ae400" stroke-width="1.2" />
<polygon points="704.0,554.0 716.0,554.0 716.0,564.0 704.0,564.0" fill="#3ae400" stroke="#3ae400" stroke-width="1.2" />
<polygon points="761.0,554.0 772.0,554.0 772.0,564.0 761.0,564.0" fill="#3ae400" stroke="#3ae400" stroke-width="1.2" />
<polygon points="629.0,556.0 651.0,556.0 656.0,566.0 636.0,566.0" fill="#3ae400" stroke="#3ae400" stroke-width="1.2" />
<polygon points="910.0,343.0 932.0,322.5 1007.0,340.0 1045.8,350.0 1085.8,356.2 1089.5,410.0 1045.8,415.0 1044.5,430.0 1092.0,423.8 1094.5,453.8 1062.0,467.5 1058.0,490.0 1054.0,508.0 1060.0,522.0 1046.0,540.0 1026.0,558.0 1006.0,545.0 996.0,528.0 978.0,525.0 978.0,660.0 937.0,666.0 937.0,700.0 922.0,705.0 922.0,380.0 910.0,377.0" fill="url(#rwall)" stroke="url(#rwall)" stroke-width="1.2" />
<polygon points="977.0,452.5 1007.0,452.5 994.0,472.5 980.0,470.0" fill="#00567f" stroke="#00567f" stroke-width="1.2" />
<polygon points="952.0,375.0 964.5,375.0 964.5,380.0 952.0,380.0" fill="#00567f" stroke="#00567f" stroke-width="1.2" />
<polygon points="1011.6,474.4 1018.8,474.4 1018.8,491.2 1011.6,491.2" fill="#00567f" stroke="#00567f" stroke-width="1.2" />
<polygon points="1002.0,498.0 1009.0,498.0 1009.0,520.0 1002.0,520.0" fill="#00567f" stroke="#00567f" stroke-width="1.2" />
<polygon points="959.0,520.0 997.0,520.0 997.0,539.0 959.0,535.0" fill="#00567f" stroke="#00567f" stroke-width="1.2" />
<polygon points="985.0,460.0 1002.0,460.0 1002.0,472.0 985.0,472.0" fill="#00567f" stroke="#00567f" stroke-width="1.2" />
<polygon points="1027.0,475.0 1034.5,475.0 1034.5,490.0 1027.0,490.0" fill="#00567f" stroke="#00567f" stroke-width="1.2" />
<polygon points="978.0,588.0 1001.0,582.0 1021.0,580.0 1046.0,600.0 1058.0,628.0 1054.0,642.0 1016.0,644.0 978.0,636.0" fill="#d4f000" stroke="#d4f000" stroke-width="1.2" mask="url(#spS)"/>
<polygon points="1009.0,587.0 1026.0,585.0 1040.0,600.0 1040.0,613.5 1016.0,610.0" fill="#c8f000" stroke="#c8f000" stroke-width="1.2" />
<polygon points="1040.0,609.0 1057.0,612.0 1057.0,633.0 1042.0,630.0" fill="#d8f000" stroke="#d8f000" stroke-width="1.2" />
<polygon points="973.0,642.3 1014.0,640.0 1054.8,637.5 1078.7,640.0 1110.0,652.0 1138.7,671.0 1122.0,690.3 1093.0,719.0 1074.0,714.3 1054.8,707.0 1014.0,700.0 985.0,692.7 970.8,676.0 975.6,656.7" fill="url(#otab)" stroke="url(#otab)" stroke-width="1.2" />
<polygon points="987.6,664.0 1030.8,666.3 1033.2,678.3 987.6,676.0" fill="#00567f" stroke="#00567f" stroke-width="1.2" />
<polygon points="978.0,690.3 1050.0,697.5 1059.5,709.5 985.0,700.0" fill="#00567f" stroke="#00567f" stroke-width="1.2" />
<polygon points="1082.0,465.0 1110.8,465.0 1094.5,477.5 1097.0,500.0 1114.5,505.0 1114.5,515.0 1102.0,517.5 1104.5,545.0 1087.0,545.0 1079.5,532.5" fill="#f87800" stroke="#f87800" stroke-width="1.2" />
<polygon points="1138.2,460.0 1147.0,460.0 1150.8,477.5 1143.2,485.0 1137.0,472.5" fill="#ff2000" stroke="#ff2000" stroke-width="1.2" />
<polygon points="1132.0,510.0 1147.0,510.0 1149.5,561.8 1132.0,550.0" fill="#ff2000" stroke="#ff2000" stroke-width="1.2" />
<polygon points="1110.8,535.0 1119.5,535.0 1119.5,561.8 1110.8,561.8" fill="#ff4000" stroke="#ff4000" stroke-width="1.2" />
<polygon points="123.5,562.0 286.0,562.0 276.0,584.5 274.8,639.5 256.0,642.0 166.0,643.2 151.0,639.5 136.0,640.8 123.5,627.0 126.0,587.0" fill="url(#cyan)" stroke="url(#cyan)" stroke-width="1.2" />
<polygon points="142.2,577.0 152.2,577.0 151.0,637.0 143.5,637.0" fill="#00567f" stroke="#00567f" stroke-width="1.2" />
<polygon points="256.0,584.5 273.5,584.5 273.5,637.0 256.0,637.0" fill="url(#bluep)" stroke="url(#bluep)" stroke-width="1.2" />
<polygon points="211.0,562.0 287.2,562.0 287.2,584.5 253.5,587.0 221.0,589.5 211.0,584.5" fill="#0ee60e" stroke="#0ee60e" stroke-width="1.2" />
<polygon points="231.0,594.5 237.2,594.5 237.2,608.2 231.0,608.2" fill="#30e030" stroke="#30e030" stroke-width="1.2" />
<polygon points="318.5,562.0 328.5,562.0 328.5,599.5 318.5,599.5" fill="#a0f000" stroke="#a0f000" stroke-width="1.2" />
<polygon points="318.5,612.0 328.5,612.0 331.0,644.5 319.8,644.5" fill="#a0f000" stroke="#a0f000" stroke-width="1.2" />
<polygon points="173.5,664.5 191.0,660.8 228.5,662.0 263.5,664.5 266.0,687.0 277.2,689.5 266.0,702.0 246.0,709.5 221.0,707.0 181.0,707.0 173.5,682.0" fill="#30d0e8" stroke="#30d0e8" stroke-width="1.2" mask="url(#spS)" opacity="0.8"/>
<polygon points="136.0,702.0 143.5,702.0 143.5,707.0 136.0,707.0" fill="#30d0e8" stroke="#30d0e8" stroke-width="1.2" opacity="0.6"/>
<polygon points="288.5,643.2 296.0,643.2 294.8,649.5 288.5,649.5" fill="#30e030" stroke="#30e030" stroke-width="1.2" />
<polygon points="396.0,520.0 576.0,520.0 576.0,560.0 571.0,600.0 476.0,630.0 426.0,660.0 406.0,650.0 391.0,600.0 388.0,560.0" fill="url(#cyan)" stroke="url(#cyan)" stroke-width="1.2" opacity="0.85"/>
<polygon points="388.0,600.0 406.0,600.0 421.0,660.0 388.0,650.0" fill="#00567f" stroke="#00567f" stroke-width="1.2" />
<polygon points="501.0,525.0 526.0,520.0 536.0,550.0 506.0,550.0" fill="#00567f" stroke="#00567f" stroke-width="1.2" />
<polygon points="446.0,585.0 461.0,585.0 466.0,600.0 456.0,610.0" fill="#00567f" stroke="#00567f" stroke-width="1.2" />
<polygon points="379.0,560.4 396.2,559.0 407.1,554.3 429.0,548.8 434.5,550.2 437.3,558.4 440.7,574.8 448.2,602.2 456.5,618.7 467.4,602.2 464.7,579.0 467.4,565.2 466.0,546.0 482.5,546.7 503.0,551.5 530.5,552.9 571.6,555.0 573.0,563.9 566.1,574.8 564.0,636.5 578.4,646.1 596.0,648.8 596.0,657.0 585.3,655.7 571.6,657.0 544.2,657.0 516.8,658.4 482.5,662.5 451.0,659.8 442.8,662.5 426.3,657.0 418.1,646.1 409.9,642.0 420.8,639.2 424.9,624.2 418.1,605.0 403.0,583.0 389.3,568.0" fill="url(#chairg)" stroke="url(#chairg)" stroke-width="1.2" />
<polygon points="474.0,702.0 511.5,692.0 556.5,688.0 624.0,702.0 664.0,702.0 724.0,697.0 824.0,689.5 931.5,682.0 982.0,704.5 1052.0,717.0 1084.5,724.5 1074.5,732.0 932.0,744.5 824.0,759.5 749.0,763.0 694.0,773.0 669.0,764.5 646.5,759.5 624.0,754.5 594.0,758.0 569.0,759.5 554.0,752.0 536.5,734.5 516.5,714.5 474.0,707.0" fill="url(#floorv)" stroke="url(#floorv)" stroke-width="1.2" />
<polygon points="474.0,702.0 511.5,692.0 556.5,688.0 624.0,702.0 664.0,702.0 724.0,697.0 824.0,689.5 931.5,682.0 982.0,704.5 1052.0,717.0 1084.5,724.5 1074.5,732.0 932.0,744.5 824.0,759.5 749.0,763.0 694.0,773.0 669.0,764.5 646.5,759.5 624.0,754.5 594.0,758.0 569.0,759.5 554.0,752.0 536.5,734.5 516.5,714.5 474.0,707.0" fill="url(#floorhm)" stroke="url(#floorhm)" stroke-width="1.2" mask="url(#fadeTop)"/>
<polygon points="614.0,608.2 684.0,622.0 749.0,628.2 864.0,620.8 921.5,624.5 926.5,679.5 874.0,682.0 824.0,689.5 724.0,697.0 664.0,703.2 636.5,702.0 634.0,667.0 614.0,634.5" fill="#e0f800" stroke="#e0f800" stroke-width="1.2" />
<polygon points="596.5,578.2 859.0,572.0 862.8,620.8 749.0,628.2 684.0,620.8 624.0,604.5 596.5,592.0" fill="url(#sofatop)" stroke="url(#sofatop)" stroke-width="1.2" />
<polygon points="612.8,632.0 634.0,637.0 636.5,682.0 664.0,697.0 634.0,703.2 624.0,697.0 626.5,667.0 614.0,657.0" fill="#00567f" stroke="#00567f" stroke-width="1.2" />
<polygon points="776.5,689.5 824.0,688.2 824.0,694.5 776.5,694.5" fill="#00567f" stroke="#00567f" stroke-width="1.2" />
<polygon points="874.0,679.5 919.0,675.8 914.0,684.5 879.0,683.2" fill="#00567f" stroke="#00567f" stroke-width="1.2" />
<polygon points="559.0,654.5 614.0,654.5 626.5,669.5 622.8,702.0 619.0,722.0 596.5,724.5 594.0,712.0 559.0,707.0" fill="url(#leg)" stroke="url(#leg)" stroke-width="1.2" />
<polygon points="876.5,562.0 904.0,562.0 909.0,592.0 906.5,617.0 924.0,622.0 924.0,629.5 909.0,639.5 889.0,629.5 874.0,612.0 871.5,584.5" fill="#ff1000" stroke="#ff1000" stroke-width="1.2" />
<polygon points="474.0,692.0 506.5,685.8 554.0,689.5 556.5,702.0 524.0,712.0 474.0,707.0" fill="#90f000" stroke="#90f000" stroke-width="1.2" />
<polygon points="646.5,737.0 669.0,737.0 674.0,762.0 659.0,767.0 649.0,757.0" fill="#ff8000" stroke="#ff8000" stroke-width="1.2" />
<polygon points="569.0,562.0 649.0,562.0 649.0,573.2 569.0,573.2" fill="url(#cyan)" stroke="url(#cyan)" stroke-width="1.2" opacity="0.5"/>
<polygon points="1104.5,562.0 1118.2,562.0 1117.0,607.0 1118.2,627.0 1109.5,632.0 1107.0,659.5 1102.0,657.0 1099.5,624.5 1104.5,587.0" fill="#ff7000" stroke="#ff7000" stroke-width="1.2" />
<polygon points="1114.5,634.5 1139.5,637.0 1139.5,657.0 1117.0,657.0" fill="#ff6a00" stroke="#ff6a00" stroke-width="1.2" />
<polygon points="1144.5,562.0 1158.2,562.0 1154.5,584.5 1149.5,612.0 1167.0,612.0 1172.0,637.0 1152.0,637.0 1149.5,654.5 1144.5,637.0 1145.8,587.0" fill="#ff2000" stroke="#ff2000" stroke-width="1.2" />
<polygon points="1142.0,664.5 1154.5,664.5 1154.5,677.0 1142.0,677.0" fill="#ff2000" stroke="#ff2000" stroke-width="1.2" /></g><!--/CLOUD--><!--ROBOT--><g id="robot"><defs><linearGradient id="cyl" x1="0" y1="0" x2="1" y2="0"><stop offset="0" stop-color="#0a0830"/><stop offset="0.35" stop-color="#0e0ea0"/><stop offset="1" stop-color="#0e10e0"/></linearGradient></defs><path d="M1209.5,803 L1209.5,839 A71.5,14 0 0 0 1352.5,841 L1352.5,805 Z" fill="url(#cyl)" transform="rotate(0)"/><ellipse cx="1281" cy="804" rx="71.5" ry="14" fill="#0c0c0c" transform="rotate(4 1281 803)"/><polygon points="1229.5,773.0 1244.0,770.0 1302.0,774.5 1334.5,782.0 1332.0,788.5 1270.0,792.0 1232.0,787.0" fill="#0a0a0a"/><polygon points="1232.0,783.0 1276.0,778.0 1298.0,775.0 1303.0,783.0 1276.0,789.0 1256.0,794.0 1266.0,802.0 1248.0,806.0 1240.0,794.0" fill="#6c6c6c"/><polygon points="1288.0,788.0 1321.0,786.0 1326.0,794.0 1296.0,798.0" fill="#5e5e5e"/><ellipse cx="1278" cy="796" rx="11" ry="5.5" fill="#5a5a5a"/><rect x="1237" y="801" width="9" height="7" fill="#e01010"/><polyline points="1299.0,786.0 1356.0,781.0 1357.0,774.0 1353.0,771.0" fill="none" stroke="#b0b0b0" stroke-width="1.6"/><rect x="1234" y="767" width="10" height="4" fill="#cfcfcf"/><line x1="1239.5" y1="468.0" x2="1240.5" y2="772.0" stroke="#262626" stroke-width="5.5"/><line x1="1240.3" y1="468.0" x2="1241.3" y2="772.0" stroke="#3a3a3a" stroke-width="1.9"/><rect x="1235.7" y="511.6" width="8" height="6" fill="#c8c8c8" transform="rotate(-0.2 1239.7 514.6)"/><rect x="1235.9" y="594.4" width="8" height="6" fill="#c8c8c8" transform="rotate(-0.2 1239.9 597.4)"/><rect x="1236.2" y="677.0" width="8" height="6" fill="#c8c8c8" transform="rotate(-0.2 1240.2 680.0)"/><line x1="1221.0" y1="479.0" x2="1306.0" y2="783.0" stroke="#262626" stroke-width="6"/><line x1="1221.8" y1="479.0" x2="1306.8" y2="783.0" stroke="#3a3a3a" stroke-width="2.1"/><rect x="1228.0" y="515.5" width="8" height="6" fill="#c8c8c8" transform="rotate(-15.6 1232.0 518.5)"/><rect x="1251.1" y="598.0" width="8" height="6" fill="#c8c8c8" transform="rotate(-15.6 1255.1 601.0)"/><rect x="1275.4" y="685.0" width="8" height="6" fill="#c8c8c8" transform="rotate(-15.6 1279.4 688.0)"/><line x1="1260.5" y1="481.0" x2="1349.0" y2="781.0" stroke="#262626" stroke-width="6"/><line x1="1261.3" y1="481.0" x2="1349.8" y2="781.0" stroke="#3a3a3a" stroke-width="2.1"/><rect x="1267.6" y="515.5" width="8" height="6" fill="#c8c8c8" transform="rotate(-16.4 1271.6 518.5)"/><rect x="1291.6" y="597.0" width="8" height="6" fill="#c8c8c8" transform="rotate(-16.4 1295.6 600.0)"/><rect x="1316.4" y="681.0" width="8" height="6" fill="#c8c8c8" transform="rotate(-16.4 1320.4 684.0)"/><polygon points="1207.0,465.0 1268.0,467.0 1268.0,479.0 1207.0,477.0" fill="none" stroke="#5a5a5a" stroke-width="2.5"/><polygon points="1213.0,468.0 1222.0,468.0 1222.0,480.0 1213.0,480.0" fill="#4a4a4a"/><polygon points="1256.0,469.0 1264.0,469.0 1264.0,480.0 1256.0,480.0" fill="#4a4a4a"/><polygon points="1208.0,454.0 1267.0,456.0 1267.0,464.0 1208.0,463.0" fill="#1a1a1a" stroke="#606060" stroke-width="1.5"/><polygon points="1206.0,442.0 1216.0,439.5 1266.0,441.5 1269.0,447.0 1268.0,454.0 1219.0,454.5 1207.0,452.0 1204.5,447.0" fill="#262626" stroke="#8a8a8a" stroke-width="1"/><polygon points="1207.0,443.0 1217.0,441.0 1218.0,450.0 1208.0,452.0" fill="#111"/><rect x="1235" y="469" width="8" height="7" fill="#d0d0d0"/></g><!--/ROBOT-->
</svg>
</div>
<!-- right handle -->
<div class="abs" style="left:1816px;top:40px;width:14px;height:1014px;border:1px solid #a8a39d;border-radius:6px;background:linear-gradient(90deg,#f4f3f2,#e3e1de)"></div>
<svg class="ic" style="left:1822px;top:545px" width="6" height="8" viewBox="0 0 6 8"><path d="M5.5 0.5 L0.5 4 L5.5 7.5Z" fill="#999" stroke="#666"/></svg>

<!-- TIME PANEL -->
<div class="hdr" style="left:0;top:1061px;width:1831px">
  <svg class="ic" style="left:4px;top:6px" width="16" height="16" viewBox="0 0 16 16"><circle cx="8" cy="8" r="6.8" fill="#fff" stroke="#444" stroke-width="1.6"/><path d="M8 4 L8 8.5 L11 8.5" fill="none" stroke="#222" stroke-width="1.3"/></svg>
  <span class="t" style="letter-spacing:0.4px;left:26px">Time</span>
  <div class="xbtn" style="left:1815px;top:6px"><svg width="11" height="13" viewBox="0 0 11 13" style="position:absolute;left:0;top:0"><path d="M2.5 3.5 L8.5 9.5 M8.5 3.5 L2.5 9.5" stroke="#555" stroke-width="2.4"/></svg></div>
</div>
<span class="lbl" style="letter-spacing:-0.35px;left:12px;top:1098px">ROS Time:</span>
<div class="inp" style="left:112px;top:1094px;width:178px">1488887492.07</div>
<span class="lbl" style="left:297px;top:1098px">ROS Elapsed:</span>
<div class="inp" style="left:425px;top:1094px;width:178px">63.67</div>
<span class="lbl" style="letter-spacing:0.24px;left:611px;top:1098px">Wall Time:</span>
<div class="inp" style="left:711px;top:1094px;width:178px">1488887492.30</div>
<span class="lbl" style="left:896px;top:1098px">Wall Elapsed:</span>
<div class="inp" style="left:1024px;top:1094px;width:178px">63.72</div>
<svg class="ic" style="left:1668px;top:1101px" width="15" height="15" viewBox="0 0 15 15"><rect x="0.5" y="0.5" width="13" height="13" rx="2" fill="#fff" stroke="#9c9893"/></svg>
<span class="lbl" style="letter-spacing:0.67px;left:1691px;top:1098px">Experimental</span>
<div class="abs" style="left:0;top:1131px;width:1831px;height:1px;background:#d8d4cf"></div>
<div class="btn" style="left:3px;top:1135px;width:68px;height:29px;line-height:27px">Reset</div>
<span class="lbl" style="left:1786px;top:1134px">4 fps</span>
</body></html>
